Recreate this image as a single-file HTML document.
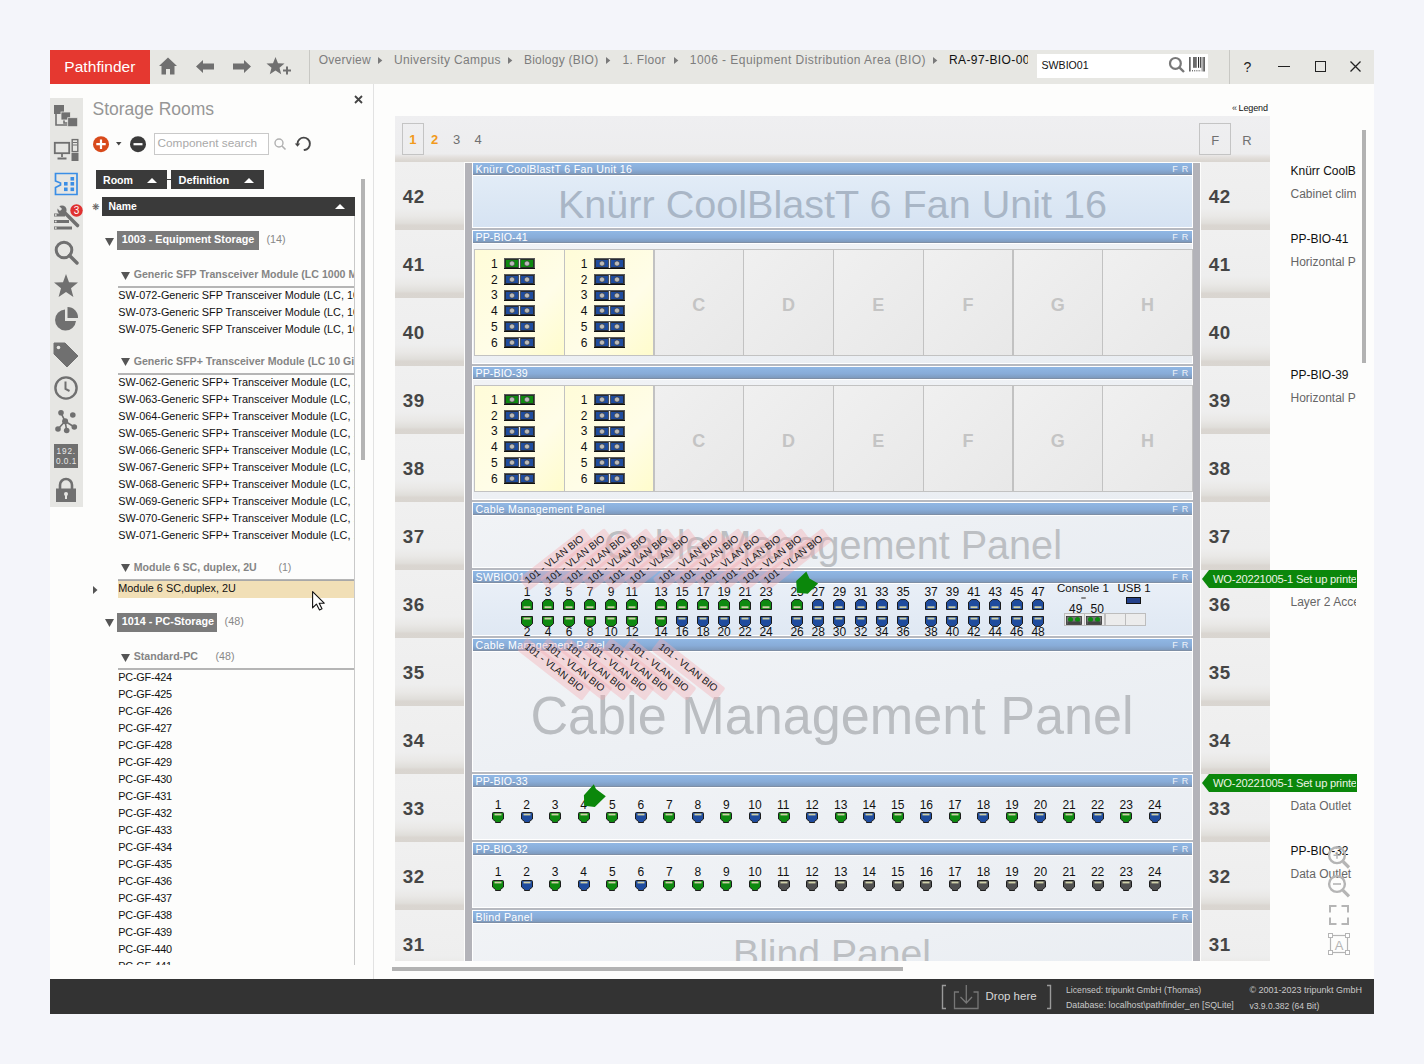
<!DOCTYPE html>
<html><head><meta charset="utf-8"><style>
html,body{margin:0;padding:0;}
body{width:1424px;height:1064px;overflow:hidden;position:relative;background:#f4f5fa;font-family:"Liberation Sans", sans-serif;}
div{box-sizing:border-box;}
</style></head><body>
<div style="position:absolute;left:50px;top:84px;width:1324px;height:895px;background:#fdfdfc;"></div><div style="position:absolute;left:50px;top:50px;width:1324px;height:34px;background:#e7e7e3;"></div><div style="position:absolute;left:50px;top:50px;width:100px;height:34px;background:#e53830;"></div><div style="position:absolute;left:64.3px;top:58.78px;font-size:15.5px;line-height:15.5px;height:15.5px;color:#fff;font-weight:normal;white-space:nowrap;letter-spacing:0.05px;">Pathfinder</div><svg style="position:absolute;left:159px;top:57px;overflow:visible;" width="18" height="18" viewBox="0 0 18 18"><path d="M9 0.5 L18 9 L15.5 9 L15.5 17.5 L11 17.5 L11 12 L7 12 L7 17.5 L2.5 17.5 L2.5 9 L0 9 Z" fill="#707070"/></svg><svg style="position:absolute;left:196px;top:60px;overflow:visible;" width="18" height="13" viewBox="0 0 18 13"><path d="M0 6.5 L7 0 L7 3.5 L18 3.5 L18 9.5 L7 9.5 L7 13 Z" fill="#707070"/></svg><svg style="position:absolute;left:233px;top:60px;overflow:visible;" width="18" height="13" viewBox="0 0 18 13"><path d="M18 6.5 L11 0 L11 3.5 L0 3.5 L0 9.5 L11 9.5 L11 13 Z" fill="#707070"/></svg><svg style="position:absolute;left:267px;top:57px;overflow:visible;" width="25" height="18" viewBox="0 0 25 18"><path d="M8.5 0 L11 6.2 L17.5 6.6 L12.5 10.8 L14.2 17.3 L8.5 13.6 L2.8 17.3 L4.5 10.8 L-0.5 6.6 L6 6.2 Z" fill="#707070"/><path d="M16 13.5 H24 M20 9.5 V17.5" stroke="#707070" stroke-width="2"/></svg><div style="position:absolute;left:309px;top:50px;width:1px;height:34px;background:#c8c8c4;"></div><div style="position:absolute;left:1229px;top:50px;width:1px;height:34px;background:#c8c8c4;"></div><div style="position:absolute;left:318.7px;top:53.64px;font-size:12px;line-height:12px;height:12px;color:#7d7d7d;font-weight:normal;white-space:nowrap;letter-spacing:0.29px;">Overview</div><svg style="position:absolute;left:378px;top:57px;overflow:visible;" width="5" height="7" viewBox="0 0 5 7"><path d="M0 0 L4.3 3.5 L0 7 Z" fill="#7a7a7a"/></svg><div style="position:absolute;left:394px;top:53.64px;font-size:12px;line-height:12px;height:12px;color:#7d7d7d;font-weight:normal;white-space:nowrap;letter-spacing:0.36px;">University Campus</div><svg style="position:absolute;left:508px;top:57px;overflow:visible;" width="5" height="7" viewBox="0 0 5 7"><path d="M0 0 L4.3 3.5 L0 7 Z" fill="#7a7a7a"/></svg><div style="position:absolute;left:523.9px;top:53.64px;font-size:12px;line-height:12px;height:12px;color:#7d7d7d;font-weight:normal;white-space:nowrap;letter-spacing:0.24px;">Biology (BIO)</div><svg style="position:absolute;left:606px;top:57px;overflow:visible;" width="5" height="7" viewBox="0 0 5 7"><path d="M0 0 L4.3 3.5 L0 7 Z" fill="#7a7a7a"/></svg><div style="position:absolute;left:622.5px;top:53.64px;font-size:12px;line-height:12px;height:12px;color:#7d7d7d;font-weight:normal;white-space:nowrap;letter-spacing:0.32px;">1. Floor</div><svg style="position:absolute;left:673.6px;top:57px;overflow:visible;" width="5" height="7" viewBox="0 0 5 7"><path d="M0 0 L4.3 3.5 L0 7 Z" fill="#7a7a7a"/></svg><div style="position:absolute;left:689.8px;top:53.64px;font-size:12px;line-height:12px;height:12px;color:#7d7d7d;font-weight:normal;white-space:nowrap;letter-spacing:0.45px;">1006 - Equipment Distribution Area (BIO)</div><svg style="position:absolute;left:933px;top:57px;overflow:visible;" width="5" height="7" viewBox="0 0 5 7"><path d="M0 0 L4.3 3.5 L0 7 Z" fill="#7a7a7a"/></svg><div style="position:absolute;left:949px;top:50px;width:79px;height:34px;overflow:hidden;"><div style="position:absolute;left:0px;top:3.64px;font-size:12px;line-height:12px;height:12px;color:#111;font-weight:normal;white-space:nowrap;letter-spacing:0.4px;">RA-97-BIO-001</div></div><div style="position:absolute;left:1037px;top:54px;width:171px;height:24px;background:#fff;"></div><div style="position:absolute;left:1041.5px;top:60.03px;font-size:10.6px;line-height:10.6px;height:10.6px;color:#111;font-weight:normal;white-space:nowrap;">SWBIO01</div><svg style="position:absolute;left:1166px;top:54px;overflow:visible;" width="20" height="20" viewBox="0 0 20 20"><circle cx="9.4" cy="9.4" r="5.4" fill="none" stroke="#787878" stroke-width="2.2"/><path d="M13.3 13.3 L18 18" stroke="#787878" stroke-width="2.4"/></svg><svg style="position:absolute;left:1188px;top:56px;overflow:visible;" width="19" height="17" viewBox="0 0 19 17"><rect x="1" y="1" width="1.7" height="14.5" fill="#666"/><rect x="5" y="1" width="3.8" height="10.8" fill="#6c6c6c"/><rect x="10" y="1" width="1.1" height="10.8" fill="#2a2a2a"/><rect x="12.2" y="1" width="1.1" height="10.8" fill="#2a2a2a"/><rect x="13.4" y="1" width="1.8" height="14.5" fill="#b0b0b0"/><rect x="15.2" y="1" width="1.8" height="14.5" fill="#666"/><path d="M4 14.8 H13" stroke="#333" stroke-width="1" stroke-dasharray="1 1.2"/></svg><div style="position:absolute;left:1243.5px;top:59.65px;font-size:14px;line-height:14px;height:14px;color:#222;font-weight:normal;white-space:nowrap;">?</div><div style="position:absolute;left:1278px;top:65.5px;width:12px;height:1.2px;background:#222;"></div><div style="position:absolute;left:1315px;top:61px;width:10.5px;height:10.5px;border:1.2px solid #222;"></div><svg style="position:absolute;left:1350px;top:61px;overflow:visible;" width="11" height="11" viewBox="0 0 11 11"><path d="M0.5 0.5 L10.5 10.5 M10.5 0.5 L0.5 10.5" stroke="#222" stroke-width="1.3"/></svg><div style="position:absolute;left:50px;top:979px;width:1324px;height:35px;background:#333333;"></div><svg style="position:absolute;left:942px;top:985px;overflow:visible;" width="110" height="25" viewBox="0 0 110 25"><path d="M4 0.5 H0.5 V23.5 H4" fill="none" stroke="#9a9a9a" stroke-width="1.4"/><path d="M105 0.5 H108.5 V23.5 H105" fill="none" stroke="#9a9a9a" stroke-width="1.4"/><path d="M17 7 H12.5 V23.5 H36 V7 H31.5" fill="none" stroke="#777" stroke-width="1.3"/><path d="M24.3 0 V18 M18.5 12 L24.3 18 L30 12" fill="none" stroke="#777" stroke-width="1.3"/></svg><div style="position:absolute;left:985.5px;top:991.27px;font-size:11.5px;line-height:11.5px;height:11.5px;color:#d8d8d8;font-weight:normal;white-space:nowrap;">Drop here</div><div style="position:absolute;left:1066px;top:985.84px;font-size:8.7px;line-height:8.7px;height:8.7px;color:#c9c9c9;font-weight:normal;white-space:nowrap;">Licensed: tripunkt GmbH (Thomas)</div><div style="position:absolute;left:1066px;top:1001.35px;font-size:8.8px;line-height:8.8px;height:8.8px;color:#c9c9c9;font-weight:normal;white-space:nowrap;">Database: localhost\pathfinder_en [SQLite]</div><div style="position:absolute;left:1249.4px;top:985.58px;font-size:9.0px;line-height:9.0px;height:9.0px;color:#c9c9c9;font-weight:normal;white-space:nowrap;">© 2001-2023 tripunkt GmbH</div><div style="position:absolute;left:1249.4px;top:1001.56px;font-size:8.55px;line-height:8.55px;height:8.55px;color:#c9c9c9;font-weight:normal;white-space:nowrap;">v3.9.0.382 (64 Bit)</div><div style="position:absolute;left:50px;top:98px;width:33px;height:409px;background:#e6e6e3;"></div><svg style="position:absolute;left:53px;top:104px;overflow:visible;" width="27" height="24" viewBox="0 0 27 24"><path d="M3 9 V21 H15 M11 15 V19 H15" stroke="#707070" stroke-width="1.6" fill="none"/><rect x="1" y="1" width="10" height="9" fill="#707070"/><rect x="8" y="8" width="9.5" height="8" fill="#707070" stroke="#e6e6e3" stroke-width="0.8"/><rect x="14.7" y="13.7" width="10" height="9" fill="#707070" stroke="#e6e6e3" stroke-width="0.8"/></svg><svg style="position:absolute;left:53px;top:138px;overflow:visible;" width="27" height="24" viewBox="0 0 27 24"><rect x="1.8" y="4.8" width="14.4" height="10.4" fill="none" stroke="#707070" stroke-width="1.8"/><path d="M9 15 V19" stroke="#707070" stroke-width="1.8"/><path d="M4.5 20.5 H13.5" stroke="#707070" stroke-width="2"/><rect x="19.2" y="1.6" width="5.6" height="12" fill="none" stroke="#707070" stroke-width="1.4"/><path d="M20 4.5 H24 M20 7 H24" stroke="#707070" stroke-width="1"/><rect x="18.5" y="15" width="7" height="8" fill="#707070"/></svg><svg style="position:absolute;left:53.5px;top:172px;overflow:visible;" width="25" height="24" viewBox="0 0 25 24"><path d="M1.5 1.5 H23 V22.5 H1.5 V15.5 L6.5 13 V11 L1.5 9 Z" fill="none" stroke="#3a8ee6" stroke-width="1.7"/><rect x="16.5" y="5" width="3.6" height="3.6" fill="#3a8ee6"/><rect x="10" y="10" width="3.6" height="3.6" fill="#3a8ee6"/><rect x="16.5" y="10" width="3.6" height="3.6" fill="#3a8ee6"/><rect x="10" y="15.5" width="3.6" height="3.6" fill="#3a8ee6"/><rect x="16.5" y="15.5" width="3.6" height="3.6" fill="#3a8ee6"/></svg><svg style="position:absolute;left:53px;top:205px;overflow:visible;" width="28" height="26" viewBox="0 0 28 26"><rect x="1" y="8.5" width="11" height="3" fill="#707070"/><rect x="1" y="15" width="15" height="3" fill="#707070"/><rect x="1" y="21.5" width="18" height="3" fill="#707070"/><rect x="1.8" y="9.2" width="1.8" height="1.6" fill="#e6e6e3"/><rect x="1.8" y="15.7" width="1.8" height="1.6" fill="#e6e6e3"/><rect x="1.8" y="22.2" width="1.8" height="1.6" fill="#e6e6e3"/><path d="M10 6 L24.5 20.5" stroke="#707070" stroke-width="3.6" stroke-linecap="round"/><circle cx="9" cy="5" r="4.6" fill="#707070"/><path d="M3.5 0.5 L8 5" stroke="#e6e6e3" stroke-width="3"/></svg><svg style="position:absolute;left:69.5px;top:203.5px;overflow:visible;" width="13" height="13" viewBox="0 0 13 13"><circle cx="6.5" cy="6.5" r="6.2" fill="#e03131"/><text x="6.5" y="10.3" font-size="10" font-family="Liberation Sans" fill="#fff" text-anchor="middle">3</text></svg><svg style="position:absolute;left:54px;top:240px;overflow:visible;" width="25" height="25" viewBox="0 0 25 25"><circle cx="10" cy="10" r="7.8" fill="none" stroke="#707070" stroke-width="3"/><path d="M15.5 15.5 L23 23" stroke="#707070" stroke-width="3.4" stroke-linecap="round"/></svg><svg style="position:absolute;left:54px;top:274px;overflow:visible;" width="24" height="23" viewBox="0 0 24 23"><path d="M12 0 L15 8.2 L24 8.6 L17 14.2 L19.4 23 L12 18 L4.6 23 L7 14.2 L0 8.6 L9 8.2 Z" fill="#707070"/></svg><svg style="position:absolute;left:54px;top:307px;overflow:visible;" width="25" height="25" viewBox="0 0 25 25"><path d="M11 2.5 A10.5 10.5 0 1 0 22 14 H11 Z" fill="#707070"/><path d="M13.5 0 A10.5 10.5 0 0 1 24 11 H13.5 Z" fill="#707070"/></svg><svg style="position:absolute;left:54px;top:342.5px;overflow:visible;" width="24" height="24" viewBox="0 0 24 24"><path d="M0 0 H11 L24 13 L13 24 L0 11 Z" fill="#707070" stroke="#707070" stroke-linejoin="round" stroke-width="1"/><circle cx="4.5" cy="4.5" r="1.8" fill="#e6e6e3"/></svg><svg style="position:absolute;left:54px;top:376px;overflow:visible;" width="24" height="24" viewBox="0 0 24 24"><circle cx="12" cy="12" r="10.6" fill="none" stroke="#707070" stroke-width="2.4"/><path d="M11.5 5.5 V13 L15.5 15" fill="none" stroke="#707070" stroke-width="2"/></svg><svg style="position:absolute;left:50px;top:404px;overflow:visible;" width="28" height="32" viewBox="0 0 28 32"><path d="M15.1 17.3 L11 8.8 M15.1 17.3 L8 25 M15.1 17.3 L16.7 26.5 M15.1 17.3 L24.3 23" stroke="#707070" stroke-width="1.6" fill="none"/><circle cx="15.1" cy="17.3" r="3" fill="#707070"/><circle cx="11" cy="8.8" r="2.8" fill="#707070"/><circle cx="22.8" cy="11" r="2.8" fill="#707070"/><circle cx="8" cy="25" r="2.8" fill="#707070"/><circle cx="16.7" cy="26.5" r="2.8" fill="#707070"/><circle cx="24.3" cy="23" r="2.8" fill="#707070"/></svg><div style="position:absolute;left:54px;top:444px;width:24px;height:24px;background:#707070;"></div><div style="position:absolute;left:56.5px;top:447.56px;font-size:8.2px;line-height:8.2px;height:8.2px;color:#e8e8e8;font-weight:normal;white-space:nowrap;letter-spacing:0.9px;">192.</div><div style="position:absolute;left:56px;top:457.56px;font-size:8.2px;line-height:8.2px;height:8.2px;color:#e8e8e8;font-weight:normal;white-space:nowrap;letter-spacing:0.5px;">0.0.1</div><svg style="position:absolute;left:55px;top:478px;overflow:visible;" width="22" height="24" viewBox="0 0 22 24"><path d="M5 11 V7 A6 6 0 0 1 17 7 V11" fill="none" stroke="#707070" stroke-width="2.6"/><rect x="1" y="10.5" width="20" height="13.5" fill="#707070"/><circle cx="11" cy="16" r="2" fill="#e6e6e3"/><rect x="10" y="16" width="2" height="5" fill="#e6e6e3"/></svg><div style="position:absolute;left:373px;top:84px;width:1px;height:895px;background:#e2e2e2;"></div><div style="position:absolute;left:92.5px;top:101.19px;font-size:17.5px;line-height:17.5px;height:17.5px;color:#969696;font-weight:normal;white-space:nowrap;letter-spacing:0px;">Storage Rooms</div><svg style="position:absolute;left:354px;top:95px;overflow:visible;" width="9" height="9" viewBox="0 0 9 9"><path d="M1 1 L8 8 M8 1 L1 8" stroke="#444" stroke-width="1.8"/></svg><svg style="position:absolute;left:93px;top:135.5px;overflow:visible;" width="17" height="17" viewBox="0 0 17 17"><circle cx="8" cy="8.2" r="8" fill="#d84a1b"/><path d="M8 3.5 V13 M3.3 8.2 H12.7" stroke="#fff" stroke-width="2.2"/></svg><svg style="position:absolute;left:116px;top:141.5px;overflow:visible;" width="6" height="4" viewBox="0 0 6 4"><path d="M0 0 H5.5 L2.75 3.5 Z" fill="#444"/></svg><svg style="position:absolute;left:130px;top:135.5px;overflow:visible;" width="17" height="17" viewBox="0 0 17 17"><circle cx="8" cy="8.2" r="8" fill="#3b3b3b"/><path d="M3.5 8.2 H12.5" stroke="#fff" stroke-width="2.2"/></svg><div style="position:absolute;left:154px;top:133px;width:115px;height:22px;border:1px solid #c9c9c9;background:#fff;"></div><div style="position:absolute;left:157.5px;top:138.01px;font-size:11.8px;line-height:11.8px;height:11.8px;color:#a9a9a9;font-weight:normal;white-space:nowrap;">Component search</div><svg style="position:absolute;left:273.5px;top:138px;overflow:visible;" width="13" height="12" viewBox="0 0 13 12"><circle cx="5" cy="5" r="4" fill="none" stroke="#b0b0b0" stroke-width="1.4"/><path d="M8 8 L11.5 11.5" stroke="#b0b0b0" stroke-width="1.6"/></svg><svg style="position:absolute;left:290px;top:133px;overflow:visible;" width="26" height="22" viewBox="0 0 26 22"><path d="M14.5 17 A6.2 6.2 0 1 0 7.5 10.5" fill="none" stroke="#474747" stroke-width="1.9" stroke-linecap="round"/><path d="M4.8 10.6 L10.2 10.6 L7.5 13.8 Z" fill="#474747"/></svg><div style="position:absolute;left:96px;top:170px;width:71px;height:19px;background:#3a3a3a;"></div><div style="position:absolute;left:167px;top:179px;width:4px;height:1px;background:#3a3a3a;"></div><div style="position:absolute;left:171px;top:170px;width:93px;height:19px;background:#3a3a3a;"></div><div style="position:absolute;left:103px;top:174.73px;font-size:10.6px;line-height:10.6px;height:10.6px;color:#fff;font-weight:bold;white-space:nowrap;">Room</div><div style="position:absolute;left:178.5px;top:175.09px;font-size:11px;line-height:11px;height:11px;color:#fff;font-weight:bold;white-space:nowrap;">Definition</div><svg style="position:absolute;left:147px;top:177.5px;overflow:visible;" width="10" height="5" viewBox="0 0 10 5"><path d="M0 5 L5 0 L10 5 Z" fill="#fff"/></svg><svg style="position:absolute;left:244px;top:177.5px;overflow:visible;" width="10" height="5" viewBox="0 0 10 5"><path d="M0 5 L5 0 L10 5 Z" fill="#fff"/></svg><div style="position:absolute;left:102px;top:197px;width:253px;height:19px;background:#3a3a3a;"></div><div style="position:absolute;left:108.4px;top:201.70px;font-size:10.4px;line-height:10.4px;height:10.4px;color:#fff;font-weight:bold;white-space:nowrap;">Name</div><svg style="position:absolute;left:334.5px;top:204px;overflow:visible;" width="10" height="5" viewBox="0 0 10 5"><path d="M0 5 L5 0 L10 5 Z" fill="#fff"/></svg><div style="position:absolute;left:91.5px;top:203.38px;font-size:9px;line-height:9px;height:9px;color:#555;font-weight:normal;white-space:nowrap;">❋</div><div style="position:absolute;left:354px;top:216px;width:1px;height:749px;background:#c9c9c9;"></div><div style="position:absolute;left:361px;top:179px;width:4px;height:281px;background:#b4b4b4;"></div><div style="position:absolute;left:0;top:0;width:1424px;height:1064px;clip-path:inset(216px 1070px 99px 84px);"><svg style="position:absolute;left:105px;top:237.5px;overflow:visible;" width="9" height="8" viewBox="0 0 9 8"><path d="M0 0 H9 L4.5 8 Z" fill="#555"/></svg><div style="position:absolute;left:117px;top:231px;width:142px;height:19px;background:#7b7b7b;"></div><div style="position:absolute;left:121.7px;top:234.26px;font-size:10.8px;line-height:10.8px;height:10.8px;color:#fff;font-weight:bold;white-space:nowrap;">1003 - Equipment Storage</div><div style="position:absolute;left:266.4px;top:234.26px;font-size:10.8px;line-height:10.8px;height:10.8px;color:#888;font-weight:normal;white-space:nowrap;">(14)</div><svg style="position:absolute;left:121px;top:271.5px;overflow:visible;" width="9" height="8" viewBox="0 0 9 8"><path d="M0 0 H9 L4.5 8 Z" fill="#555"/></svg><div style="position:absolute;left:118px;top:0px;width:236px;height:0px;"></div><div style="position:absolute;left:133.7px;top:269.03px;font-size:10.6px;line-height:10.6px;height:10.6px;color:#858585;font-weight:bold;white-space:nowrap;">Generic SFP Transceiver Module (LC 1000 M</div><div style="position:absolute;left:118px;top:286px;width:236px;height:2px;background:#b5b5b5;"></div><div style="position:absolute;left:118.3px;top:290.32px;font-size:10.85px;line-height:10.85px;height:10.85px;color:#111;font-weight:normal;white-space:nowrap;">SW-072-Generic SFP Transceiver Module (LC, 1000</div><div style="position:absolute;left:118.3px;top:307.32px;font-size:10.85px;line-height:10.85px;height:10.85px;color:#111;font-weight:normal;white-space:nowrap;">SW-073-Generic SFP Transceiver Module (LC, 1000</div><div style="position:absolute;left:118.3px;top:324.32px;font-size:10.85px;line-height:10.85px;height:10.85px;color:#111;font-weight:normal;white-space:nowrap;">SW-075-Generic SFP Transceiver Module (LC, 1000</div><svg style="position:absolute;left:121px;top:358.3px;overflow:visible;" width="9" height="8" viewBox="0 0 9 8"><path d="M0 0 H9 L4.5 8 Z" fill="#555"/></svg><div style="position:absolute;left:118px;top:0px;width:236px;height:0px;"></div><div style="position:absolute;left:133.7px;top:355.83px;font-size:10.6px;line-height:10.6px;height:10.6px;color:#858585;font-weight:bold;white-space:nowrap;">Generic SFP+ Transceiver Module (LC 10 Gi</div><div style="position:absolute;left:118px;top:372.8px;width:236px;height:2px;background:#b5b5b5;"></div><div style="position:absolute;left:118.3px;top:377.32px;font-size:10.85px;line-height:10.85px;height:10.85px;color:#111;font-weight:normal;white-space:nowrap;">SW-062-Generic SFP+ Transceiver Module (LC, 10</div><div style="position:absolute;left:118.3px;top:394.32px;font-size:10.85px;line-height:10.85px;height:10.85px;color:#111;font-weight:normal;white-space:nowrap;">SW-063-Generic SFP+ Transceiver Module (LC, 10</div><div style="position:absolute;left:118.3px;top:411.32px;font-size:10.85px;line-height:10.85px;height:10.85px;color:#111;font-weight:normal;white-space:nowrap;">SW-064-Generic SFP+ Transceiver Module (LC, 10</div><div style="position:absolute;left:118.3px;top:428.32px;font-size:10.85px;line-height:10.85px;height:10.85px;color:#111;font-weight:normal;white-space:nowrap;">SW-065-Generic SFP+ Transceiver Module (LC, 10</div><div style="position:absolute;left:118.3px;top:445.32px;font-size:10.85px;line-height:10.85px;height:10.85px;color:#111;font-weight:normal;white-space:nowrap;">SW-066-Generic SFP+ Transceiver Module (LC, 10</div><div style="position:absolute;left:118.3px;top:462.32px;font-size:10.85px;line-height:10.85px;height:10.85px;color:#111;font-weight:normal;white-space:nowrap;">SW-067-Generic SFP+ Transceiver Module (LC, 10</div><div style="position:absolute;left:118.3px;top:479.32px;font-size:10.85px;line-height:10.85px;height:10.85px;color:#111;font-weight:normal;white-space:nowrap;">SW-068-Generic SFP+ Transceiver Module (LC, 10</div><div style="position:absolute;left:118.3px;top:496.32px;font-size:10.85px;line-height:10.85px;height:10.85px;color:#111;font-weight:normal;white-space:nowrap;">SW-069-Generic SFP+ Transceiver Module (LC, 10</div><div style="position:absolute;left:118.3px;top:513.32px;font-size:10.85px;line-height:10.85px;height:10.85px;color:#111;font-weight:normal;white-space:nowrap;">SW-070-Generic SFP+ Transceiver Module (LC, 10</div><div style="position:absolute;left:118.3px;top:530.32px;font-size:10.85px;line-height:10.85px;height:10.85px;color:#111;font-weight:normal;white-space:nowrap;">SW-071-Generic SFP+ Transceiver Module (LC, 10</div><svg style="position:absolute;left:121px;top:564.2px;overflow:visible;" width="9" height="8" viewBox="0 0 9 8"><path d="M0 0 H9 L4.5 8 Z" fill="#555"/></svg><div style="position:absolute;left:118px;top:0px;width:236px;height:0px;"></div><div style="position:absolute;left:133.7px;top:561.73px;font-size:10.6px;line-height:10.6px;height:10.6px;color:#858585;font-weight:bold;white-space:nowrap;">Module 6 SC, duplex, 2U</div><div style="position:absolute;left:278.4px;top:561.73px;font-size:10.6px;line-height:10.6px;height:10.6px;color:#888;font-weight:normal;white-space:nowrap;">(1)</div><div style="position:absolute;left:118px;top:578.7px;width:236px;height:2px;background:#b5b5b5;"></div><div style="position:absolute;left:118px;top:580px;width:236px;height:18px;background:#f1dfb6;border-top:1.5px solid #a8a8a8;"></div><div style="position:absolute;left:118.3px;top:582.62px;font-size:10.85px;line-height:10.85px;height:10.85px;color:#111;font-weight:normal;white-space:nowrap;">Module 6 SC,duplex, 2U</div><svg style="position:absolute;left:93px;top:585.5px;overflow:visible;" width="5" height="8" viewBox="0 0 5 8"><path d="M0 0 L4.5 4 L0 8 Z" fill="#555"/></svg><svg style="position:absolute;left:105px;top:618.5px;overflow:visible;" width="9" height="8" viewBox="0 0 9 8"><path d="M0 0 H9 L4.5 8 Z" fill="#555"/></svg><div style="position:absolute;left:117px;top:613px;width:100px;height:19px;background:#7b7b7b;"></div><div style="position:absolute;left:121.7px;top:616.26px;font-size:10.8px;line-height:10.8px;height:10.8px;color:#fff;font-weight:bold;white-space:nowrap;">1014 - PC-Storage</div><div style="position:absolute;left:224.6px;top:616.26px;font-size:10.8px;line-height:10.8px;height:10.8px;color:#888;font-weight:normal;white-space:nowrap;">(48)</div><svg style="position:absolute;left:121px;top:653.7px;overflow:visible;" width="9" height="8" viewBox="0 0 9 8"><path d="M0 0 H9 L4.5 8 Z" fill="#555"/></svg><div style="position:absolute;left:118px;top:0px;width:236px;height:0px;"></div><div style="position:absolute;left:133.7px;top:651.23px;font-size:10.6px;line-height:10.6px;height:10.6px;color:#858585;font-weight:bold;white-space:nowrap;">Standard-PC</div><div style="position:absolute;left:215.6px;top:651.23px;font-size:10.6px;line-height:10.6px;height:10.6px;color:#888;font-weight:normal;white-space:nowrap;">(48)</div><div style="position:absolute;left:118px;top:668.2px;width:236px;height:2px;background:#b5b5b5;"></div><div style="position:absolute;left:118.3px;top:671.62px;font-size:10.85px;line-height:10.85px;height:10.85px;color:#111;font-weight:normal;white-space:nowrap;letter-spacing:-0.2px;">PC-GF-424</div><div style="position:absolute;left:118.3px;top:688.62px;font-size:10.85px;line-height:10.85px;height:10.85px;color:#111;font-weight:normal;white-space:nowrap;letter-spacing:-0.2px;">PC-GF-425</div><div style="position:absolute;left:118.3px;top:705.62px;font-size:10.85px;line-height:10.85px;height:10.85px;color:#111;font-weight:normal;white-space:nowrap;letter-spacing:-0.2px;">PC-GF-426</div><div style="position:absolute;left:118.3px;top:722.62px;font-size:10.85px;line-height:10.85px;height:10.85px;color:#111;font-weight:normal;white-space:nowrap;letter-spacing:-0.2px;">PC-GF-427</div><div style="position:absolute;left:118.3px;top:739.62px;font-size:10.85px;line-height:10.85px;height:10.85px;color:#111;font-weight:normal;white-space:nowrap;letter-spacing:-0.2px;">PC-GF-428</div><div style="position:absolute;left:118.3px;top:756.62px;font-size:10.85px;line-height:10.85px;height:10.85px;color:#111;font-weight:normal;white-space:nowrap;letter-spacing:-0.2px;">PC-GF-429</div><div style="position:absolute;left:118.3px;top:773.62px;font-size:10.85px;line-height:10.85px;height:10.85px;color:#111;font-weight:normal;white-space:nowrap;letter-spacing:-0.2px;">PC-GF-430</div><div style="position:absolute;left:118.3px;top:790.62px;font-size:10.85px;line-height:10.85px;height:10.85px;color:#111;font-weight:normal;white-space:nowrap;letter-spacing:-0.2px;">PC-GF-431</div><div style="position:absolute;left:118.3px;top:807.62px;font-size:10.85px;line-height:10.85px;height:10.85px;color:#111;font-weight:normal;white-space:nowrap;letter-spacing:-0.2px;">PC-GF-432</div><div style="position:absolute;left:118.3px;top:824.62px;font-size:10.85px;line-height:10.85px;height:10.85px;color:#111;font-weight:normal;white-space:nowrap;letter-spacing:-0.2px;">PC-GF-433</div><div style="position:absolute;left:118.3px;top:841.62px;font-size:10.85px;line-height:10.85px;height:10.85px;color:#111;font-weight:normal;white-space:nowrap;letter-spacing:-0.2px;">PC-GF-434</div><div style="position:absolute;left:118.3px;top:858.62px;font-size:10.85px;line-height:10.85px;height:10.85px;color:#111;font-weight:normal;white-space:nowrap;letter-spacing:-0.2px;">PC-GF-435</div><div style="position:absolute;left:118.3px;top:875.62px;font-size:10.85px;line-height:10.85px;height:10.85px;color:#111;font-weight:normal;white-space:nowrap;letter-spacing:-0.2px;">PC-GF-436</div><div style="position:absolute;left:118.3px;top:892.62px;font-size:10.85px;line-height:10.85px;height:10.85px;color:#111;font-weight:normal;white-space:nowrap;letter-spacing:-0.2px;">PC-GF-437</div><div style="position:absolute;left:118.3px;top:909.62px;font-size:10.85px;line-height:10.85px;height:10.85px;color:#111;font-weight:normal;white-space:nowrap;letter-spacing:-0.2px;">PC-GF-438</div><div style="position:absolute;left:118.3px;top:926.62px;font-size:10.85px;line-height:10.85px;height:10.85px;color:#111;font-weight:normal;white-space:nowrap;letter-spacing:-0.2px;">PC-GF-439</div><div style="position:absolute;left:118.3px;top:943.62px;font-size:10.85px;line-height:10.85px;height:10.85px;color:#111;font-weight:normal;white-space:nowrap;letter-spacing:-0.2px;">PC-GF-440</div><div style="position:absolute;left:118.3px;top:960.62px;font-size:10.85px;line-height:10.85px;height:10.85px;color:#111;font-weight:normal;white-space:nowrap;letter-spacing:-0.2px;">PC-GF-441</div></div><svg style="position:absolute;left:311.8px;top:590.6px;overflow:visible;" width="14" height="21" viewBox="0 0 14 21"><path d="M0.6 0.6 V16.9 L4.4 13.1 L7.5 18.9 L10 17.8 L7.2 12.2 L12.2 12.2 Z" fill="#fff" stroke="#111" stroke-width="1.1" stroke-linejoin="round"/></svg><div style="position:absolute;left:395px;top:116px;width:875px;height:46px;background:linear-gradient(#efeff1 0%,#ededee 82%,#e4e1de 89%,#dcd8d3 96%,#d9d5d0 100%);"></div><div style="position:absolute;left:402px;top:123px;width:22px;height:32px;border:1px solid #c4c4c4;"></div><div style="position:absolute;left:409.3px;top:132.70px;font-size:13px;line-height:13px;height:13px;color:#f29a1c;font-weight:bold;white-space:nowrap;">1</div><div style="position:absolute;left:431px;top:132.70px;font-size:13px;line-height:13px;height:13px;color:#f29a1c;font-weight:bold;white-space:nowrap;">2</div><div style="position:absolute;left:453px;top:133.20px;font-size:13px;line-height:13px;height:13px;color:#707070;font-weight:normal;white-space:nowrap;">3</div><div style="position:absolute;left:474.5px;top:133.20px;font-size:13px;line-height:13px;height:13px;color:#707070;font-weight:normal;white-space:nowrap;">4</div><div style="position:absolute;left:1199px;top:123px;width:32px;height:32px;border:1px solid #c4c4c4;"></div><div style="position:absolute;left:1211.3px;top:133.60px;font-size:13px;line-height:13px;height:13px;color:#707070;font-weight:normal;white-space:nowrap;">F</div><div style="position:absolute;left:1242.3px;top:133.60px;font-size:13px;line-height:13px;height:13px;color:#707070;font-weight:normal;white-space:nowrap;">R</div><div style="position:absolute;left:1232px;top:104.38px;font-size:9px;line-height:9px;height:9px;color:#333;font-weight:normal;white-space:nowrap;">«</div><div style="position:absolute;left:1238.5px;top:104.38px;font-size:9px;line-height:9px;height:9px;color:#111;font-weight:normal;white-space:nowrap;letter-spacing:-0.1px;">Legend</div><div style="position:absolute;left:0;top:0;width:1424px;height:1064px;clip-path:inset(116px 50px 103px 380px);"><div style="position:absolute;left:395px;top:162px;width:69px;height:68px;background:linear-gradient(#f0f0f0 0%,#eeeeee 68%,#e9e8e6 80%,#e0deda 90%,#dad6d1 93%,#d9d5d0 100%);"></div><div style="position:absolute;left:1201px;top:162px;width:69px;height:68px;background:linear-gradient(#f0f0f0 0%,#eeeeee 68%,#e9e8e6 80%,#e0deda 90%,#dad6d1 93%,#d9d5d0 100%);"></div><div style="position:absolute;left:402.8px;top:187.69px;font-size:18.8px;line-height:18.8px;height:18.8px;color:#454545;font-weight:bold;white-space:nowrap;letter-spacing:0.4px;">42</div><div style="position:absolute;left:1208.8px;top:187.69px;font-size:18.8px;line-height:18.8px;height:18.8px;color:#454545;font-weight:bold;white-space:nowrap;letter-spacing:0.4px;">42</div><div style="position:absolute;left:395px;top:230px;width:69px;height:68px;background:linear-gradient(#f0f0f0 0%,#eeeeee 68%,#e9e8e6 80%,#e0deda 90%,#dad6d1 93%,#d9d5d0 100%);"></div><div style="position:absolute;left:1201px;top:230px;width:69px;height:68px;background:linear-gradient(#f0f0f0 0%,#eeeeee 68%,#e9e8e6 80%,#e0deda 90%,#dad6d1 93%,#d9d5d0 100%);"></div><div style="position:absolute;left:402.8px;top:255.69px;font-size:18.8px;line-height:18.8px;height:18.8px;color:#454545;font-weight:bold;white-space:nowrap;letter-spacing:0.4px;">41</div><div style="position:absolute;left:1208.8px;top:255.69px;font-size:18.8px;line-height:18.8px;height:18.8px;color:#454545;font-weight:bold;white-space:nowrap;letter-spacing:0.4px;">41</div><div style="position:absolute;left:395px;top:298px;width:69px;height:68px;background:linear-gradient(#f0f0f0 0%,#eeeeee 68%,#e9e8e6 80%,#e0deda 90%,#dad6d1 93%,#d9d5d0 100%);"></div><div style="position:absolute;left:1201px;top:298px;width:69px;height:68px;background:linear-gradient(#f0f0f0 0%,#eeeeee 68%,#e9e8e6 80%,#e0deda 90%,#dad6d1 93%,#d9d5d0 100%);"></div><div style="position:absolute;left:402.8px;top:323.69px;font-size:18.8px;line-height:18.8px;height:18.8px;color:#454545;font-weight:bold;white-space:nowrap;letter-spacing:0.4px;">40</div><div style="position:absolute;left:1208.8px;top:323.69px;font-size:18.8px;line-height:18.8px;height:18.8px;color:#454545;font-weight:bold;white-space:nowrap;letter-spacing:0.4px;">40</div><div style="position:absolute;left:395px;top:366px;width:69px;height:68px;background:linear-gradient(#f0f0f0 0%,#eeeeee 68%,#e9e8e6 80%,#e0deda 90%,#dad6d1 93%,#d9d5d0 100%);"></div><div style="position:absolute;left:1201px;top:366px;width:69px;height:68px;background:linear-gradient(#f0f0f0 0%,#eeeeee 68%,#e9e8e6 80%,#e0deda 90%,#dad6d1 93%,#d9d5d0 100%);"></div><div style="position:absolute;left:402.8px;top:391.69px;font-size:18.8px;line-height:18.8px;height:18.8px;color:#454545;font-weight:bold;white-space:nowrap;letter-spacing:0.4px;">39</div><div style="position:absolute;left:1208.8px;top:391.69px;font-size:18.8px;line-height:18.8px;height:18.8px;color:#454545;font-weight:bold;white-space:nowrap;letter-spacing:0.4px;">39</div><div style="position:absolute;left:395px;top:434px;width:69px;height:68px;background:linear-gradient(#f0f0f0 0%,#eeeeee 68%,#e9e8e6 80%,#e0deda 90%,#dad6d1 93%,#d9d5d0 100%);"></div><div style="position:absolute;left:1201px;top:434px;width:69px;height:68px;background:linear-gradient(#f0f0f0 0%,#eeeeee 68%,#e9e8e6 80%,#e0deda 90%,#dad6d1 93%,#d9d5d0 100%);"></div><div style="position:absolute;left:402.8px;top:459.69px;font-size:18.8px;line-height:18.8px;height:18.8px;color:#454545;font-weight:bold;white-space:nowrap;letter-spacing:0.4px;">38</div><div style="position:absolute;left:1208.8px;top:459.69px;font-size:18.8px;line-height:18.8px;height:18.8px;color:#454545;font-weight:bold;white-space:nowrap;letter-spacing:0.4px;">38</div><div style="position:absolute;left:395px;top:502px;width:69px;height:68px;background:linear-gradient(#f0f0f0 0%,#eeeeee 68%,#e9e8e6 80%,#e0deda 90%,#dad6d1 93%,#d9d5d0 100%);"></div><div style="position:absolute;left:1201px;top:502px;width:69px;height:68px;background:linear-gradient(#f0f0f0 0%,#eeeeee 68%,#e9e8e6 80%,#e0deda 90%,#dad6d1 93%,#d9d5d0 100%);"></div><div style="position:absolute;left:402.8px;top:527.69px;font-size:18.8px;line-height:18.8px;height:18.8px;color:#454545;font-weight:bold;white-space:nowrap;letter-spacing:0.4px;">37</div><div style="position:absolute;left:1208.8px;top:527.69px;font-size:18.8px;line-height:18.8px;height:18.8px;color:#454545;font-weight:bold;white-space:nowrap;letter-spacing:0.4px;">37</div><div style="position:absolute;left:395px;top:570px;width:69px;height:68px;background:linear-gradient(#f0f0f0 0%,#eeeeee 68%,#e9e8e6 80%,#e0deda 90%,#dad6d1 93%,#d9d5d0 100%);"></div><div style="position:absolute;left:1201px;top:570px;width:69px;height:68px;background:linear-gradient(#f0f0f0 0%,#eeeeee 68%,#e9e8e6 80%,#e0deda 90%,#dad6d1 93%,#d9d5d0 100%);"></div><div style="position:absolute;left:402.8px;top:595.69px;font-size:18.8px;line-height:18.8px;height:18.8px;color:#454545;font-weight:bold;white-space:nowrap;letter-spacing:0.4px;">36</div><div style="position:absolute;left:1208.8px;top:595.69px;font-size:18.8px;line-height:18.8px;height:18.8px;color:#454545;font-weight:bold;white-space:nowrap;letter-spacing:0.4px;">36</div><div style="position:absolute;left:395px;top:638px;width:69px;height:68px;background:linear-gradient(#f0f0f0 0%,#eeeeee 68%,#e9e8e6 80%,#e0deda 90%,#dad6d1 93%,#d9d5d0 100%);"></div><div style="position:absolute;left:1201px;top:638px;width:69px;height:68px;background:linear-gradient(#f0f0f0 0%,#eeeeee 68%,#e9e8e6 80%,#e0deda 90%,#dad6d1 93%,#d9d5d0 100%);"></div><div style="position:absolute;left:402.8px;top:663.69px;font-size:18.8px;line-height:18.8px;height:18.8px;color:#454545;font-weight:bold;white-space:nowrap;letter-spacing:0.4px;">35</div><div style="position:absolute;left:1208.8px;top:663.69px;font-size:18.8px;line-height:18.8px;height:18.8px;color:#454545;font-weight:bold;white-space:nowrap;letter-spacing:0.4px;">35</div><div style="position:absolute;left:395px;top:706px;width:69px;height:68px;background:linear-gradient(#f0f0f0 0%,#eeeeee 68%,#e9e8e6 80%,#e0deda 90%,#dad6d1 93%,#d9d5d0 100%);"></div><div style="position:absolute;left:1201px;top:706px;width:69px;height:68px;background:linear-gradient(#f0f0f0 0%,#eeeeee 68%,#e9e8e6 80%,#e0deda 90%,#dad6d1 93%,#d9d5d0 100%);"></div><div style="position:absolute;left:402.8px;top:731.69px;font-size:18.8px;line-height:18.8px;height:18.8px;color:#454545;font-weight:bold;white-space:nowrap;letter-spacing:0.4px;">34</div><div style="position:absolute;left:1208.8px;top:731.69px;font-size:18.8px;line-height:18.8px;height:18.8px;color:#454545;font-weight:bold;white-space:nowrap;letter-spacing:0.4px;">34</div><div style="position:absolute;left:395px;top:774px;width:69px;height:68px;background:linear-gradient(#f0f0f0 0%,#eeeeee 68%,#e9e8e6 80%,#e0deda 90%,#dad6d1 93%,#d9d5d0 100%);"></div><div style="position:absolute;left:1201px;top:774px;width:69px;height:68px;background:linear-gradient(#f0f0f0 0%,#eeeeee 68%,#e9e8e6 80%,#e0deda 90%,#dad6d1 93%,#d9d5d0 100%);"></div><div style="position:absolute;left:402.8px;top:799.69px;font-size:18.8px;line-height:18.8px;height:18.8px;color:#454545;font-weight:bold;white-space:nowrap;letter-spacing:0.4px;">33</div><div style="position:absolute;left:1208.8px;top:799.69px;font-size:18.8px;line-height:18.8px;height:18.8px;color:#454545;font-weight:bold;white-space:nowrap;letter-spacing:0.4px;">33</div><div style="position:absolute;left:395px;top:842px;width:69px;height:68px;background:linear-gradient(#f0f0f0 0%,#eeeeee 68%,#e9e8e6 80%,#e0deda 90%,#dad6d1 93%,#d9d5d0 100%);"></div><div style="position:absolute;left:1201px;top:842px;width:69px;height:68px;background:linear-gradient(#f0f0f0 0%,#eeeeee 68%,#e9e8e6 80%,#e0deda 90%,#dad6d1 93%,#d9d5d0 100%);"></div><div style="position:absolute;left:402.8px;top:867.69px;font-size:18.8px;line-height:18.8px;height:18.8px;color:#454545;font-weight:bold;white-space:nowrap;letter-spacing:0.4px;">32</div><div style="position:absolute;left:1208.8px;top:867.69px;font-size:18.8px;line-height:18.8px;height:18.8px;color:#454545;font-weight:bold;white-space:nowrap;letter-spacing:0.4px;">32</div><div style="position:absolute;left:395px;top:910px;width:69px;height:68px;background:linear-gradient(#f0f0f0 0%,#eeeeee 68%,#e9e8e6 80%,#e0deda 90%,#dad6d1 93%,#d9d5d0 100%);"></div><div style="position:absolute;left:1201px;top:910px;width:69px;height:68px;background:linear-gradient(#f0f0f0 0%,#eeeeee 68%,#e9e8e6 80%,#e0deda 90%,#dad6d1 93%,#d9d5d0 100%);"></div><div style="position:absolute;left:402.8px;top:935.69px;font-size:18.8px;line-height:18.8px;height:18.8px;color:#454545;font-weight:bold;white-space:nowrap;letter-spacing:0.4px;">31</div><div style="position:absolute;left:1208.8px;top:935.69px;font-size:18.8px;line-height:18.8px;height:18.8px;color:#454545;font-weight:bold;white-space:nowrap;letter-spacing:0.4px;">31</div><div style="position:absolute;left:472px;top:162px;width:721px;height:68px;background:#fff;"></div><div style="position:absolute;left:465px;top:163px;width:7px;height:67.5px;background:#b3b3b9;"></div><div style="position:absolute;left:1193px;top:163px;width:7px;height:67.5px;background:#b3b3b9;"></div><div style="position:absolute;left:473px;top:163px;width:719px;height:12px;background:linear-gradient(#90b7e4 0%,#88acd8 55%,#7f9cc0 88%,#7e8898 100%);"></div><div style="position:absolute;left:475.5px;top:163.83px;font-size:10.6px;line-height:10.6px;height:10.6px;color:#fff;font-weight:normal;white-space:nowrap;letter-spacing:0.32px;">Knürr CoolBlastT 6 Fan Unit 16</div><div style="position:absolute;left:1172.2px;top:164.58px;font-size:9px;line-height:9px;height:9px;color:#eef2f8;font-weight:normal;white-space:nowrap;">F</div><div style="position:absolute;left:1181.8px;top:164.58px;font-size:9px;line-height:9px;height:9px;color:#eef2f8;font-weight:normal;white-space:nowrap;">R</div><div style="position:absolute;left:473px;top:176px;width:719px;height:51px;background:linear-gradient(#e2ecf7,#d6e3f2);"></div><div style="position:absolute;left:472px;top:228px;width:721px;height:1.6px;background:#b6b9c0;"></div><div style="position:absolute;left:232.5px;top:185.48px;width:1200px;text-align:center;font-size:39.6px;line-height:39.6px;height:39.6px;color:#a9b6c6;white-space:nowrap;transform:scaleX(1.0);transform-origin:50% 0;">Knürr CoolBlastT 6 Fan Unit 16</div><div style="position:absolute;left:472px;top:230px;width:721px;height:136px;background:#fff;"></div><div style="position:absolute;left:465px;top:231px;width:7px;height:135.5px;background:#b3b3b9;"></div><div style="position:absolute;left:1193px;top:231px;width:7px;height:135.5px;background:#b3b3b9;"></div><div style="position:absolute;left:473px;top:231px;width:719px;height:12px;background:linear-gradient(#90b7e4 0%,#88acd8 55%,#7f9cc0 88%,#7e8898 100%);"></div><div style="position:absolute;left:475.5px;top:231.83px;font-size:10.6px;line-height:10.6px;height:10.6px;color:#fff;font-weight:normal;white-space:nowrap;letter-spacing:0.1px;">PP-BIO-41</div><div style="position:absolute;left:1172.2px;top:232.58px;font-size:9px;line-height:9px;height:9px;color:#eef2f8;font-weight:normal;white-space:nowrap;">F</div><div style="position:absolute;left:1181.8px;top:232.58px;font-size:9px;line-height:9px;height:9px;color:#eef2f8;font-weight:normal;white-space:nowrap;">R</div><div style="position:absolute;left:473px;top:244px;width:719px;height:119px;background:linear-gradient(170deg,#f1f3f6,#e9edf2);"></div><div style="position:absolute;left:472px;top:364px;width:721px;height:1.6px;background:#b6b9c0;"></div><div style="position:absolute;left:474.0px;top:249.2px;width:90.5px;height:106.8px;border:1px solid #c2c2c2;background:linear-gradient(135deg,#fffcd8,#fffde8 60%,#fffccc);"></div><div style="position:absolute;left:491.0px;top:257.84px;font-size:12px;line-height:12px;height:12px;color:#111;font-weight:normal;white-space:nowrap;">1</div><svg style="position:absolute;left:504.0px;top:258.0px;overflow:visible;" width="31" height="11" viewBox="0 0 31 11"><rect x="0" y="0" width="31" height="11" fill="#5a5a5a"/><rect x="0" y="10" width="31" height="1" fill="#111"/><rect x="1.5" y="1.5" width="13" height="8" fill="#0e8a10" stroke="#222" stroke-width="0.8"/><rect x="16.5" y="1.5" width="13" height="8" fill="#0e8a10" stroke="#222" stroke-width="0.8"/><rect x="14.8" y="1" width="1.4" height="9" fill="#eee"/><circle cx="8" cy="5.5" r="2.6" fill="#bbb" stroke="#333" stroke-width="0.6"/><circle cx="23" cy="5.5" r="2.6" fill="#bbb" stroke="#333" stroke-width="0.6"/></svg><div style="position:absolute;left:491.0px;top:273.64px;font-size:12px;line-height:12px;height:12px;color:#111;font-weight:normal;white-space:nowrap;">2</div><svg style="position:absolute;left:504.0px;top:273.8px;overflow:visible;" width="31" height="11" viewBox="0 0 31 11"><rect x="0" y="0" width="31" height="11" fill="#5a5a5a"/><rect x="0" y="10" width="31" height="1" fill="#111"/><rect x="1.5" y="1.5" width="13" height="8" fill="#1f4c9e" stroke="#222" stroke-width="0.8"/><rect x="16.5" y="1.5" width="13" height="8" fill="#1f4c9e" stroke="#222" stroke-width="0.8"/><rect x="14.8" y="1" width="1.4" height="9" fill="#eee"/><circle cx="8" cy="5.5" r="2.6" fill="#bbb" stroke="#333" stroke-width="0.6"/><circle cx="23" cy="5.5" r="2.6" fill="#bbb" stroke="#333" stroke-width="0.6"/></svg><div style="position:absolute;left:491.0px;top:289.44px;font-size:12px;line-height:12px;height:12px;color:#111;font-weight:normal;white-space:nowrap;">3</div><svg style="position:absolute;left:504.0px;top:289.6px;overflow:visible;" width="31" height="11" viewBox="0 0 31 11"><rect x="0" y="0" width="31" height="11" fill="#5a5a5a"/><rect x="0" y="10" width="31" height="1" fill="#111"/><rect x="1.5" y="1.5" width="13" height="8" fill="#1f4c9e" stroke="#222" stroke-width="0.8"/><rect x="16.5" y="1.5" width="13" height="8" fill="#1f4c9e" stroke="#222" stroke-width="0.8"/><rect x="14.8" y="1" width="1.4" height="9" fill="#eee"/><circle cx="8" cy="5.5" r="2.6" fill="#bbb" stroke="#333" stroke-width="0.6"/><circle cx="23" cy="5.5" r="2.6" fill="#bbb" stroke="#333" stroke-width="0.6"/></svg><div style="position:absolute;left:491.0px;top:305.24px;font-size:12px;line-height:12px;height:12px;color:#111;font-weight:normal;white-space:nowrap;">4</div><svg style="position:absolute;left:504.0px;top:305.4px;overflow:visible;" width="31" height="11" viewBox="0 0 31 11"><rect x="0" y="0" width="31" height="11" fill="#5a5a5a"/><rect x="0" y="10" width="31" height="1" fill="#111"/><rect x="1.5" y="1.5" width="13" height="8" fill="#1f4c9e" stroke="#222" stroke-width="0.8"/><rect x="16.5" y="1.5" width="13" height="8" fill="#1f4c9e" stroke="#222" stroke-width="0.8"/><rect x="14.8" y="1" width="1.4" height="9" fill="#eee"/><circle cx="8" cy="5.5" r="2.6" fill="#bbb" stroke="#333" stroke-width="0.6"/><circle cx="23" cy="5.5" r="2.6" fill="#bbb" stroke="#333" stroke-width="0.6"/></svg><div style="position:absolute;left:491.0px;top:321.04px;font-size:12px;line-height:12px;height:12px;color:#111;font-weight:normal;white-space:nowrap;">5</div><svg style="position:absolute;left:504.0px;top:321.2px;overflow:visible;" width="31" height="11" viewBox="0 0 31 11"><rect x="0" y="0" width="31" height="11" fill="#5a5a5a"/><rect x="0" y="10" width="31" height="1" fill="#111"/><rect x="1.5" y="1.5" width="13" height="8" fill="#1f4c9e" stroke="#222" stroke-width="0.8"/><rect x="16.5" y="1.5" width="13" height="8" fill="#1f4c9e" stroke="#222" stroke-width="0.8"/><rect x="14.8" y="1" width="1.4" height="9" fill="#eee"/><circle cx="8" cy="5.5" r="2.6" fill="#bbb" stroke="#333" stroke-width="0.6"/><circle cx="23" cy="5.5" r="2.6" fill="#bbb" stroke="#333" stroke-width="0.6"/></svg><div style="position:absolute;left:491.0px;top:336.84px;font-size:12px;line-height:12px;height:12px;color:#111;font-weight:normal;white-space:nowrap;">6</div><svg style="position:absolute;left:504.0px;top:337.0px;overflow:visible;" width="31" height="11" viewBox="0 0 31 11"><rect x="0" y="0" width="31" height="11" fill="#5a5a5a"/><rect x="0" y="10" width="31" height="1" fill="#111"/><rect x="1.5" y="1.5" width="13" height="8" fill="#1f4c9e" stroke="#222" stroke-width="0.8"/><rect x="16.5" y="1.5" width="13" height="8" fill="#1f4c9e" stroke="#222" stroke-width="0.8"/><rect x="14.8" y="1" width="1.4" height="9" fill="#eee"/><circle cx="8" cy="5.5" r="2.6" fill="#bbb" stroke="#333" stroke-width="0.6"/><circle cx="23" cy="5.5" r="2.6" fill="#bbb" stroke="#333" stroke-width="0.6"/></svg><div style="position:absolute;left:563.75px;top:249.2px;width:90.5px;height:106.8px;border:1px solid #c2c2c2;background:linear-gradient(135deg,#fffcd8,#fffde8 60%,#fffccc);"></div><div style="position:absolute;left:580.75px;top:257.84px;font-size:12px;line-height:12px;height:12px;color:#111;font-weight:normal;white-space:nowrap;">1</div><svg style="position:absolute;left:593.75px;top:258.0px;overflow:visible;" width="31" height="11" viewBox="0 0 31 11"><rect x="0" y="0" width="31" height="11" fill="#5a5a5a"/><rect x="0" y="10" width="31" height="1" fill="#111"/><rect x="1.5" y="1.5" width="13" height="8" fill="#1f4c9e" stroke="#222" stroke-width="0.8"/><rect x="16.5" y="1.5" width="13" height="8" fill="#1f4c9e" stroke="#222" stroke-width="0.8"/><rect x="14.8" y="1" width="1.4" height="9" fill="#eee"/><circle cx="8" cy="5.5" r="2.6" fill="#bbb" stroke="#333" stroke-width="0.6"/><circle cx="23" cy="5.5" r="2.6" fill="#bbb" stroke="#333" stroke-width="0.6"/></svg><div style="position:absolute;left:580.75px;top:273.64px;font-size:12px;line-height:12px;height:12px;color:#111;font-weight:normal;white-space:nowrap;">2</div><svg style="position:absolute;left:593.75px;top:273.8px;overflow:visible;" width="31" height="11" viewBox="0 0 31 11"><rect x="0" y="0" width="31" height="11" fill="#5a5a5a"/><rect x="0" y="10" width="31" height="1" fill="#111"/><rect x="1.5" y="1.5" width="13" height="8" fill="#1f4c9e" stroke="#222" stroke-width="0.8"/><rect x="16.5" y="1.5" width="13" height="8" fill="#1f4c9e" stroke="#222" stroke-width="0.8"/><rect x="14.8" y="1" width="1.4" height="9" fill="#eee"/><circle cx="8" cy="5.5" r="2.6" fill="#bbb" stroke="#333" stroke-width="0.6"/><circle cx="23" cy="5.5" r="2.6" fill="#bbb" stroke="#333" stroke-width="0.6"/></svg><div style="position:absolute;left:580.75px;top:289.44px;font-size:12px;line-height:12px;height:12px;color:#111;font-weight:normal;white-space:nowrap;">3</div><svg style="position:absolute;left:593.75px;top:289.6px;overflow:visible;" width="31" height="11" viewBox="0 0 31 11"><rect x="0" y="0" width="31" height="11" fill="#5a5a5a"/><rect x="0" y="10" width="31" height="1" fill="#111"/><rect x="1.5" y="1.5" width="13" height="8" fill="#1f4c9e" stroke="#222" stroke-width="0.8"/><rect x="16.5" y="1.5" width="13" height="8" fill="#1f4c9e" stroke="#222" stroke-width="0.8"/><rect x="14.8" y="1" width="1.4" height="9" fill="#eee"/><circle cx="8" cy="5.5" r="2.6" fill="#bbb" stroke="#333" stroke-width="0.6"/><circle cx="23" cy="5.5" r="2.6" fill="#bbb" stroke="#333" stroke-width="0.6"/></svg><div style="position:absolute;left:580.75px;top:305.24px;font-size:12px;line-height:12px;height:12px;color:#111;font-weight:normal;white-space:nowrap;">4</div><svg style="position:absolute;left:593.75px;top:305.4px;overflow:visible;" width="31" height="11" viewBox="0 0 31 11"><rect x="0" y="0" width="31" height="11" fill="#5a5a5a"/><rect x="0" y="10" width="31" height="1" fill="#111"/><rect x="1.5" y="1.5" width="13" height="8" fill="#1f4c9e" stroke="#222" stroke-width="0.8"/><rect x="16.5" y="1.5" width="13" height="8" fill="#1f4c9e" stroke="#222" stroke-width="0.8"/><rect x="14.8" y="1" width="1.4" height="9" fill="#eee"/><circle cx="8" cy="5.5" r="2.6" fill="#bbb" stroke="#333" stroke-width="0.6"/><circle cx="23" cy="5.5" r="2.6" fill="#bbb" stroke="#333" stroke-width="0.6"/></svg><div style="position:absolute;left:580.75px;top:321.04px;font-size:12px;line-height:12px;height:12px;color:#111;font-weight:normal;white-space:nowrap;">5</div><svg style="position:absolute;left:593.75px;top:321.2px;overflow:visible;" width="31" height="11" viewBox="0 0 31 11"><rect x="0" y="0" width="31" height="11" fill="#5a5a5a"/><rect x="0" y="10" width="31" height="1" fill="#111"/><rect x="1.5" y="1.5" width="13" height="8" fill="#1f4c9e" stroke="#222" stroke-width="0.8"/><rect x="16.5" y="1.5" width="13" height="8" fill="#1f4c9e" stroke="#222" stroke-width="0.8"/><rect x="14.8" y="1" width="1.4" height="9" fill="#eee"/><circle cx="8" cy="5.5" r="2.6" fill="#bbb" stroke="#333" stroke-width="0.6"/><circle cx="23" cy="5.5" r="2.6" fill="#bbb" stroke="#333" stroke-width="0.6"/></svg><div style="position:absolute;left:580.75px;top:336.84px;font-size:12px;line-height:12px;height:12px;color:#111;font-weight:normal;white-space:nowrap;">6</div><svg style="position:absolute;left:593.75px;top:337.0px;overflow:visible;" width="31" height="11" viewBox="0 0 31 11"><rect x="0" y="0" width="31" height="11" fill="#5a5a5a"/><rect x="0" y="10" width="31" height="1" fill="#111"/><rect x="1.5" y="1.5" width="13" height="8" fill="#1f4c9e" stroke="#222" stroke-width="0.8"/><rect x="16.5" y="1.5" width="13" height="8" fill="#1f4c9e" stroke="#222" stroke-width="0.8"/><rect x="14.8" y="1" width="1.4" height="9" fill="#eee"/><circle cx="8" cy="5.5" r="2.6" fill="#bbb" stroke="#333" stroke-width="0.6"/><circle cx="23" cy="5.5" r="2.6" fill="#bbb" stroke="#333" stroke-width="0.6"/></svg><div style="position:absolute;left:653.5px;top:249.2px;width:90.5px;height:106.8px;border:1px solid #c2c2c2;background:linear-gradient(135deg,#f0f0f0,#e8e8e8);"></div><div style="position:absolute;left:653.5px;top:249.2px;width:90.5px;height:106.8px;display:flex;align-items:center;justify-content:center;"><div style="font-size:18px;font-weight:bold;color:#c4c4c4;margin-top:5px;">C</div></div><div style="position:absolute;left:743.25px;top:249.2px;width:90.5px;height:106.8px;border:1px solid #c2c2c2;background:linear-gradient(135deg,#f0f0f0,#e8e8e8);"></div><div style="position:absolute;left:743.25px;top:249.2px;width:90.5px;height:106.8px;display:flex;align-items:center;justify-content:center;"><div style="font-size:18px;font-weight:bold;color:#c4c4c4;margin-top:5px;">D</div></div><div style="position:absolute;left:833.0px;top:249.2px;width:90.5px;height:106.8px;border:1px solid #c2c2c2;background:linear-gradient(135deg,#f0f0f0,#e8e8e8);"></div><div style="position:absolute;left:833.0px;top:249.2px;width:90.5px;height:106.8px;display:flex;align-items:center;justify-content:center;"><div style="font-size:18px;font-weight:bold;color:#c4c4c4;margin-top:5px;">E</div></div><div style="position:absolute;left:922.75px;top:249.2px;width:90.5px;height:106.8px;border:1px solid #c2c2c2;background:linear-gradient(135deg,#f0f0f0,#e8e8e8);"></div><div style="position:absolute;left:922.75px;top:249.2px;width:90.5px;height:106.8px;display:flex;align-items:center;justify-content:center;"><div style="font-size:18px;font-weight:bold;color:#c4c4c4;margin-top:5px;">F</div></div><div style="position:absolute;left:1012.5px;top:249.2px;width:90.5px;height:106.8px;border:1px solid #c2c2c2;background:linear-gradient(135deg,#f0f0f0,#e8e8e8);"></div><div style="position:absolute;left:1012.5px;top:249.2px;width:90.5px;height:106.8px;display:flex;align-items:center;justify-content:center;"><div style="font-size:18px;font-weight:bold;color:#c4c4c4;margin-top:5px;">G</div></div><div style="position:absolute;left:1102.25px;top:249.2px;width:90.5px;height:106.8px;border:1px solid #c2c2c2;background:linear-gradient(135deg,#f0f0f0,#e8e8e8);"></div><div style="position:absolute;left:1102.25px;top:249.2px;width:90.5px;height:106.8px;display:flex;align-items:center;justify-content:center;"><div style="font-size:18px;font-weight:bold;color:#c4c4c4;margin-top:5px;">H</div></div><div style="position:absolute;left:472px;top:366px;width:721px;height:136px;background:#fff;"></div><div style="position:absolute;left:465px;top:367px;width:7px;height:135.5px;background:#b3b3b9;"></div><div style="position:absolute;left:1193px;top:367px;width:7px;height:135.5px;background:#b3b3b9;"></div><div style="position:absolute;left:473px;top:367px;width:719px;height:12px;background:linear-gradient(#90b7e4 0%,#88acd8 55%,#7f9cc0 88%,#7e8898 100%);"></div><div style="position:absolute;left:475.5px;top:367.83px;font-size:10.6px;line-height:10.6px;height:10.6px;color:#fff;font-weight:normal;white-space:nowrap;letter-spacing:0.1px;">PP-BIO-39</div><div style="position:absolute;left:1172.2px;top:368.58px;font-size:9px;line-height:9px;height:9px;color:#eef2f8;font-weight:normal;white-space:nowrap;">F</div><div style="position:absolute;left:1181.8px;top:368.58px;font-size:9px;line-height:9px;height:9px;color:#eef2f8;font-weight:normal;white-space:nowrap;">R</div><div style="position:absolute;left:473px;top:380px;width:719px;height:119px;background:linear-gradient(170deg,#f1f3f6,#e9edf2);"></div><div style="position:absolute;left:472px;top:500px;width:721px;height:1.6px;background:#b6b9c0;"></div><div style="position:absolute;left:474.0px;top:385.2px;width:90.5px;height:106.8px;border:1px solid #c2c2c2;background:linear-gradient(135deg,#fffcd8,#fffde8 60%,#fffccc);"></div><div style="position:absolute;left:491.0px;top:393.84px;font-size:12px;line-height:12px;height:12px;color:#111;font-weight:normal;white-space:nowrap;">1</div><svg style="position:absolute;left:504.0px;top:394.0px;overflow:visible;" width="31" height="11" viewBox="0 0 31 11"><rect x="0" y="0" width="31" height="11" fill="#5a5a5a"/><rect x="0" y="10" width="31" height="1" fill="#111"/><rect x="1.5" y="1.5" width="13" height="8" fill="#0e8a10" stroke="#222" stroke-width="0.8"/><rect x="16.5" y="1.5" width="13" height="8" fill="#0e8a10" stroke="#222" stroke-width="0.8"/><rect x="14.8" y="1" width="1.4" height="9" fill="#eee"/><circle cx="8" cy="5.5" r="2.6" fill="#bbb" stroke="#333" stroke-width="0.6"/><circle cx="23" cy="5.5" r="2.6" fill="#bbb" stroke="#333" stroke-width="0.6"/></svg><div style="position:absolute;left:491.0px;top:409.64px;font-size:12px;line-height:12px;height:12px;color:#111;font-weight:normal;white-space:nowrap;">2</div><svg style="position:absolute;left:504.0px;top:409.8px;overflow:visible;" width="31" height="11" viewBox="0 0 31 11"><rect x="0" y="0" width="31" height="11" fill="#5a5a5a"/><rect x="0" y="10" width="31" height="1" fill="#111"/><rect x="1.5" y="1.5" width="13" height="8" fill="#1f4c9e" stroke="#222" stroke-width="0.8"/><rect x="16.5" y="1.5" width="13" height="8" fill="#1f4c9e" stroke="#222" stroke-width="0.8"/><rect x="14.8" y="1" width="1.4" height="9" fill="#eee"/><circle cx="8" cy="5.5" r="2.6" fill="#bbb" stroke="#333" stroke-width="0.6"/><circle cx="23" cy="5.5" r="2.6" fill="#bbb" stroke="#333" stroke-width="0.6"/></svg><div style="position:absolute;left:491.0px;top:425.44px;font-size:12px;line-height:12px;height:12px;color:#111;font-weight:normal;white-space:nowrap;">3</div><svg style="position:absolute;left:504.0px;top:425.6px;overflow:visible;" width="31" height="11" viewBox="0 0 31 11"><rect x="0" y="0" width="31" height="11" fill="#5a5a5a"/><rect x="0" y="10" width="31" height="1" fill="#111"/><rect x="1.5" y="1.5" width="13" height="8" fill="#1f4c9e" stroke="#222" stroke-width="0.8"/><rect x="16.5" y="1.5" width="13" height="8" fill="#1f4c9e" stroke="#222" stroke-width="0.8"/><rect x="14.8" y="1" width="1.4" height="9" fill="#eee"/><circle cx="8" cy="5.5" r="2.6" fill="#bbb" stroke="#333" stroke-width="0.6"/><circle cx="23" cy="5.5" r="2.6" fill="#bbb" stroke="#333" stroke-width="0.6"/></svg><div style="position:absolute;left:491.0px;top:441.24px;font-size:12px;line-height:12px;height:12px;color:#111;font-weight:normal;white-space:nowrap;">4</div><svg style="position:absolute;left:504.0px;top:441.4px;overflow:visible;" width="31" height="11" viewBox="0 0 31 11"><rect x="0" y="0" width="31" height="11" fill="#5a5a5a"/><rect x="0" y="10" width="31" height="1" fill="#111"/><rect x="1.5" y="1.5" width="13" height="8" fill="#1f4c9e" stroke="#222" stroke-width="0.8"/><rect x="16.5" y="1.5" width="13" height="8" fill="#1f4c9e" stroke="#222" stroke-width="0.8"/><rect x="14.8" y="1" width="1.4" height="9" fill="#eee"/><circle cx="8" cy="5.5" r="2.6" fill="#bbb" stroke="#333" stroke-width="0.6"/><circle cx="23" cy="5.5" r="2.6" fill="#bbb" stroke="#333" stroke-width="0.6"/></svg><div style="position:absolute;left:491.0px;top:457.04px;font-size:12px;line-height:12px;height:12px;color:#111;font-weight:normal;white-space:nowrap;">5</div><svg style="position:absolute;left:504.0px;top:457.2px;overflow:visible;" width="31" height="11" viewBox="0 0 31 11"><rect x="0" y="0" width="31" height="11" fill="#5a5a5a"/><rect x="0" y="10" width="31" height="1" fill="#111"/><rect x="1.5" y="1.5" width="13" height="8" fill="#1f4c9e" stroke="#222" stroke-width="0.8"/><rect x="16.5" y="1.5" width="13" height="8" fill="#1f4c9e" stroke="#222" stroke-width="0.8"/><rect x="14.8" y="1" width="1.4" height="9" fill="#eee"/><circle cx="8" cy="5.5" r="2.6" fill="#bbb" stroke="#333" stroke-width="0.6"/><circle cx="23" cy="5.5" r="2.6" fill="#bbb" stroke="#333" stroke-width="0.6"/></svg><div style="position:absolute;left:491.0px;top:472.84px;font-size:12px;line-height:12px;height:12px;color:#111;font-weight:normal;white-space:nowrap;">6</div><svg style="position:absolute;left:504.0px;top:473.0px;overflow:visible;" width="31" height="11" viewBox="0 0 31 11"><rect x="0" y="0" width="31" height="11" fill="#5a5a5a"/><rect x="0" y="10" width="31" height="1" fill="#111"/><rect x="1.5" y="1.5" width="13" height="8" fill="#1f4c9e" stroke="#222" stroke-width="0.8"/><rect x="16.5" y="1.5" width="13" height="8" fill="#1f4c9e" stroke="#222" stroke-width="0.8"/><rect x="14.8" y="1" width="1.4" height="9" fill="#eee"/><circle cx="8" cy="5.5" r="2.6" fill="#bbb" stroke="#333" stroke-width="0.6"/><circle cx="23" cy="5.5" r="2.6" fill="#bbb" stroke="#333" stroke-width="0.6"/></svg><div style="position:absolute;left:563.75px;top:385.2px;width:90.5px;height:106.8px;border:1px solid #c2c2c2;background:linear-gradient(135deg,#fffcd8,#fffde8 60%,#fffccc);"></div><div style="position:absolute;left:580.75px;top:393.84px;font-size:12px;line-height:12px;height:12px;color:#111;font-weight:normal;white-space:nowrap;">1</div><svg style="position:absolute;left:593.75px;top:394.0px;overflow:visible;" width="31" height="11" viewBox="0 0 31 11"><rect x="0" y="0" width="31" height="11" fill="#5a5a5a"/><rect x="0" y="10" width="31" height="1" fill="#111"/><rect x="1.5" y="1.5" width="13" height="8" fill="#1f4c9e" stroke="#222" stroke-width="0.8"/><rect x="16.5" y="1.5" width="13" height="8" fill="#1f4c9e" stroke="#222" stroke-width="0.8"/><rect x="14.8" y="1" width="1.4" height="9" fill="#eee"/><circle cx="8" cy="5.5" r="2.6" fill="#bbb" stroke="#333" stroke-width="0.6"/><circle cx="23" cy="5.5" r="2.6" fill="#bbb" stroke="#333" stroke-width="0.6"/></svg><div style="position:absolute;left:580.75px;top:409.64px;font-size:12px;line-height:12px;height:12px;color:#111;font-weight:normal;white-space:nowrap;">2</div><svg style="position:absolute;left:593.75px;top:409.8px;overflow:visible;" width="31" height="11" viewBox="0 0 31 11"><rect x="0" y="0" width="31" height="11" fill="#5a5a5a"/><rect x="0" y="10" width="31" height="1" fill="#111"/><rect x="1.5" y="1.5" width="13" height="8" fill="#1f4c9e" stroke="#222" stroke-width="0.8"/><rect x="16.5" y="1.5" width="13" height="8" fill="#1f4c9e" stroke="#222" stroke-width="0.8"/><rect x="14.8" y="1" width="1.4" height="9" fill="#eee"/><circle cx="8" cy="5.5" r="2.6" fill="#bbb" stroke="#333" stroke-width="0.6"/><circle cx="23" cy="5.5" r="2.6" fill="#bbb" stroke="#333" stroke-width="0.6"/></svg><div style="position:absolute;left:580.75px;top:425.44px;font-size:12px;line-height:12px;height:12px;color:#111;font-weight:normal;white-space:nowrap;">3</div><svg style="position:absolute;left:593.75px;top:425.6px;overflow:visible;" width="31" height="11" viewBox="0 0 31 11"><rect x="0" y="0" width="31" height="11" fill="#5a5a5a"/><rect x="0" y="10" width="31" height="1" fill="#111"/><rect x="1.5" y="1.5" width="13" height="8" fill="#1f4c9e" stroke="#222" stroke-width="0.8"/><rect x="16.5" y="1.5" width="13" height="8" fill="#1f4c9e" stroke="#222" stroke-width="0.8"/><rect x="14.8" y="1" width="1.4" height="9" fill="#eee"/><circle cx="8" cy="5.5" r="2.6" fill="#bbb" stroke="#333" stroke-width="0.6"/><circle cx="23" cy="5.5" r="2.6" fill="#bbb" stroke="#333" stroke-width="0.6"/></svg><div style="position:absolute;left:580.75px;top:441.24px;font-size:12px;line-height:12px;height:12px;color:#111;font-weight:normal;white-space:nowrap;">4</div><svg style="position:absolute;left:593.75px;top:441.4px;overflow:visible;" width="31" height="11" viewBox="0 0 31 11"><rect x="0" y="0" width="31" height="11" fill="#5a5a5a"/><rect x="0" y="10" width="31" height="1" fill="#111"/><rect x="1.5" y="1.5" width="13" height="8" fill="#1f4c9e" stroke="#222" stroke-width="0.8"/><rect x="16.5" y="1.5" width="13" height="8" fill="#1f4c9e" stroke="#222" stroke-width="0.8"/><rect x="14.8" y="1" width="1.4" height="9" fill="#eee"/><circle cx="8" cy="5.5" r="2.6" fill="#bbb" stroke="#333" stroke-width="0.6"/><circle cx="23" cy="5.5" r="2.6" fill="#bbb" stroke="#333" stroke-width="0.6"/></svg><div style="position:absolute;left:580.75px;top:457.04px;font-size:12px;line-height:12px;height:12px;color:#111;font-weight:normal;white-space:nowrap;">5</div><svg style="position:absolute;left:593.75px;top:457.2px;overflow:visible;" width="31" height="11" viewBox="0 0 31 11"><rect x="0" y="0" width="31" height="11" fill="#5a5a5a"/><rect x="0" y="10" width="31" height="1" fill="#111"/><rect x="1.5" y="1.5" width="13" height="8" fill="#1f4c9e" stroke="#222" stroke-width="0.8"/><rect x="16.5" y="1.5" width="13" height="8" fill="#1f4c9e" stroke="#222" stroke-width="0.8"/><rect x="14.8" y="1" width="1.4" height="9" fill="#eee"/><circle cx="8" cy="5.5" r="2.6" fill="#bbb" stroke="#333" stroke-width="0.6"/><circle cx="23" cy="5.5" r="2.6" fill="#bbb" stroke="#333" stroke-width="0.6"/></svg><div style="position:absolute;left:580.75px;top:472.84px;font-size:12px;line-height:12px;height:12px;color:#111;font-weight:normal;white-space:nowrap;">6</div><svg style="position:absolute;left:593.75px;top:473.0px;overflow:visible;" width="31" height="11" viewBox="0 0 31 11"><rect x="0" y="0" width="31" height="11" fill="#5a5a5a"/><rect x="0" y="10" width="31" height="1" fill="#111"/><rect x="1.5" y="1.5" width="13" height="8" fill="#1f4c9e" stroke="#222" stroke-width="0.8"/><rect x="16.5" y="1.5" width="13" height="8" fill="#1f4c9e" stroke="#222" stroke-width="0.8"/><rect x="14.8" y="1" width="1.4" height="9" fill="#eee"/><circle cx="8" cy="5.5" r="2.6" fill="#bbb" stroke="#333" stroke-width="0.6"/><circle cx="23" cy="5.5" r="2.6" fill="#bbb" stroke="#333" stroke-width="0.6"/></svg><div style="position:absolute;left:653.5px;top:385.2px;width:90.5px;height:106.8px;border:1px solid #c2c2c2;background:linear-gradient(135deg,#f0f0f0,#e8e8e8);"></div><div style="position:absolute;left:653.5px;top:385.2px;width:90.5px;height:106.8px;display:flex;align-items:center;justify-content:center;"><div style="font-size:18px;font-weight:bold;color:#c4c4c4;margin-top:5px;">C</div></div><div style="position:absolute;left:743.25px;top:385.2px;width:90.5px;height:106.8px;border:1px solid #c2c2c2;background:linear-gradient(135deg,#f0f0f0,#e8e8e8);"></div><div style="position:absolute;left:743.25px;top:385.2px;width:90.5px;height:106.8px;display:flex;align-items:center;justify-content:center;"><div style="font-size:18px;font-weight:bold;color:#c4c4c4;margin-top:5px;">D</div></div><div style="position:absolute;left:833.0px;top:385.2px;width:90.5px;height:106.8px;border:1px solid #c2c2c2;background:linear-gradient(135deg,#f0f0f0,#e8e8e8);"></div><div style="position:absolute;left:833.0px;top:385.2px;width:90.5px;height:106.8px;display:flex;align-items:center;justify-content:center;"><div style="font-size:18px;font-weight:bold;color:#c4c4c4;margin-top:5px;">E</div></div><div style="position:absolute;left:922.75px;top:385.2px;width:90.5px;height:106.8px;border:1px solid #c2c2c2;background:linear-gradient(135deg,#f0f0f0,#e8e8e8);"></div><div style="position:absolute;left:922.75px;top:385.2px;width:90.5px;height:106.8px;display:flex;align-items:center;justify-content:center;"><div style="font-size:18px;font-weight:bold;color:#c4c4c4;margin-top:5px;">F</div></div><div style="position:absolute;left:1012.5px;top:385.2px;width:90.5px;height:106.8px;border:1px solid #c2c2c2;background:linear-gradient(135deg,#f0f0f0,#e8e8e8);"></div><div style="position:absolute;left:1012.5px;top:385.2px;width:90.5px;height:106.8px;display:flex;align-items:center;justify-content:center;"><div style="font-size:18px;font-weight:bold;color:#c4c4c4;margin-top:5px;">G</div></div><div style="position:absolute;left:1102.25px;top:385.2px;width:90.5px;height:106.8px;border:1px solid #c2c2c2;background:linear-gradient(135deg,#f0f0f0,#e8e8e8);"></div><div style="position:absolute;left:1102.25px;top:385.2px;width:90.5px;height:106.8px;display:flex;align-items:center;justify-content:center;"><div style="font-size:18px;font-weight:bold;color:#c4c4c4;margin-top:5px;">H</div></div><div style="position:absolute;left:472px;top:502px;width:721px;height:68px;background:#fff;"></div><div style="position:absolute;left:465px;top:503px;width:7px;height:67.5px;background:#b3b3b9;"></div><div style="position:absolute;left:1193px;top:503px;width:7px;height:67.5px;background:#b3b3b9;"></div><div style="position:absolute;left:473px;top:503px;width:719px;height:12px;background:linear-gradient(#90b7e4 0%,#88acd8 55%,#7f9cc0 88%,#7e8898 100%);"></div><div style="position:absolute;left:475.5px;top:503.83px;font-size:10.6px;line-height:10.6px;height:10.6px;color:#fff;font-weight:normal;white-space:nowrap;letter-spacing:0.32px;">Cable Management Panel</div><div style="position:absolute;left:1172.2px;top:504.58px;font-size:9px;line-height:9px;height:9px;color:#eef2f8;font-weight:normal;white-space:nowrap;">F</div><div style="position:absolute;left:1181.8px;top:504.58px;font-size:9px;line-height:9px;height:9px;color:#eef2f8;font-weight:normal;white-space:nowrap;">R</div><div style="position:absolute;left:473px;top:516px;width:719px;height:51px;background:linear-gradient(170deg,#f1f3f6,#e9edf2);"></div><div style="position:absolute;left:472px;top:568px;width:721px;height:1.6px;background:#b6b9c0;"></div><div style="position:absolute;left:232.5px;top:524.94px;width:1200px;text-align:center;font-size:40px;line-height:40px;height:40px;color:#bcbfc3;white-space:nowrap;transform:scaleX(0.99);transform-origin:50% 0;">Cable Management Panel</div><div style="position:absolute;left:472px;top:570px;width:721px;height:68px;background:#fff;"></div><div style="position:absolute;left:465px;top:571px;width:7px;height:67.5px;background:#b3b3b9;"></div><div style="position:absolute;left:1193px;top:571px;width:7px;height:67.5px;background:#b3b3b9;"></div><div style="position:absolute;left:473px;top:571px;width:719px;height:12px;background:linear-gradient(#90b7e4 0%,#88acd8 55%,#7f9cc0 88%,#7e8898 100%);"></div><div style="position:absolute;left:475.5px;top:571.83px;font-size:10.6px;line-height:10.6px;height:10.6px;color:#fff;font-weight:normal;white-space:nowrap;letter-spacing:0.32px;">SWBIO01</div><div style="position:absolute;left:1172.2px;top:572.58px;font-size:9px;line-height:9px;height:9px;color:#eef2f8;font-weight:normal;white-space:nowrap;">F</div><div style="position:absolute;left:1181.8px;top:572.58px;font-size:9px;line-height:9px;height:9px;color:#eef2f8;font-weight:normal;white-space:nowrap;">R</div><div style="position:absolute;left:473px;top:584px;width:719px;height:51px;background:linear-gradient(#e9eff7,#dfe8f3);"></div><div style="position:absolute;left:472px;top:636px;width:721px;height:1.6px;background:#b6b9c0;"></div><div style="position:absolute;left:523.7px;top:585.64px;font-size:12px;line-height:12px;height:12px;color:#111;font-weight:normal;white-space:nowrap;">1</div><svg style="position:absolute;left:521.0px;top:599.2px;overflow:visible;" width="12" height="11" viewBox="0 0 12 11"><path d="M3.5 0.6 H8.5 L11.5 3.2 V10.5 H0.5 V3.2 Z" fill="#0e8a10" stroke="#1d1d1d" stroke-width="1"/><rect x="2.5" y="7.3" width="7" height="1.9" fill="#cfd0a8"/></svg><svg style="position:absolute;left:521.0px;top:616px;overflow:visible;" width="12" height="11" viewBox="0 0 12 11"><path d="M0.5 0.5 H11.5 V7.6 L8.5 10.4 H3.5 L0.5 7.6 Z" fill="#0e8a10" stroke="#1d1d1d" stroke-width="1"/><rect x="2.5" y="1.6" width="7" height="1.9" fill="#cfd0a8"/></svg><div style="position:absolute;left:523.7px;top:626.24px;font-size:12px;line-height:12px;height:12px;color:#111;font-weight:normal;white-space:nowrap;">2</div><div style="position:absolute;left:544.7px;top:585.64px;font-size:12px;line-height:12px;height:12px;color:#111;font-weight:normal;white-space:nowrap;">3</div><svg style="position:absolute;left:542.0px;top:599.2px;overflow:visible;" width="12" height="11" viewBox="0 0 12 11"><path d="M3.5 0.6 H8.5 L11.5 3.2 V10.5 H0.5 V3.2 Z" fill="#0e8a10" stroke="#1d1d1d" stroke-width="1"/><rect x="2.5" y="7.3" width="7" height="1.9" fill="#cfd0a8"/></svg><svg style="position:absolute;left:542.0px;top:616px;overflow:visible;" width="12" height="11" viewBox="0 0 12 11"><path d="M0.5 0.5 H11.5 V7.6 L8.5 10.4 H3.5 L0.5 7.6 Z" fill="#0e8a10" stroke="#1d1d1d" stroke-width="1"/><rect x="2.5" y="1.6" width="7" height="1.9" fill="#cfd0a8"/></svg><div style="position:absolute;left:544.7px;top:626.24px;font-size:12px;line-height:12px;height:12px;color:#111;font-weight:normal;white-space:nowrap;">4</div><div style="position:absolute;left:565.7px;top:585.64px;font-size:12px;line-height:12px;height:12px;color:#111;font-weight:normal;white-space:nowrap;">5</div><svg style="position:absolute;left:563.0px;top:599.2px;overflow:visible;" width="12" height="11" viewBox="0 0 12 11"><path d="M3.5 0.6 H8.5 L11.5 3.2 V10.5 H0.5 V3.2 Z" fill="#0e8a10" stroke="#1d1d1d" stroke-width="1"/><rect x="2.5" y="7.3" width="7" height="1.9" fill="#cfd0a8"/></svg><svg style="position:absolute;left:563.0px;top:616px;overflow:visible;" width="12" height="11" viewBox="0 0 12 11"><path d="M0.5 0.5 H11.5 V7.6 L8.5 10.4 H3.5 L0.5 7.6 Z" fill="#0e8a10" stroke="#1d1d1d" stroke-width="1"/><rect x="2.5" y="1.6" width="7" height="1.9" fill="#cfd0a8"/></svg><div style="position:absolute;left:565.7px;top:626.24px;font-size:12px;line-height:12px;height:12px;color:#111;font-weight:normal;white-space:nowrap;">6</div><div style="position:absolute;left:586.7px;top:585.64px;font-size:12px;line-height:12px;height:12px;color:#111;font-weight:normal;white-space:nowrap;">7</div><svg style="position:absolute;left:584.0px;top:599.2px;overflow:visible;" width="12" height="11" viewBox="0 0 12 11"><path d="M3.5 0.6 H8.5 L11.5 3.2 V10.5 H0.5 V3.2 Z" fill="#0e8a10" stroke="#1d1d1d" stroke-width="1"/><rect x="2.5" y="7.3" width="7" height="1.9" fill="#cfd0a8"/></svg><svg style="position:absolute;left:584.0px;top:616px;overflow:visible;" width="12" height="11" viewBox="0 0 12 11"><path d="M0.5 0.5 H11.5 V7.6 L8.5 10.4 H3.5 L0.5 7.6 Z" fill="#0e8a10" stroke="#1d1d1d" stroke-width="1"/><rect x="2.5" y="1.6" width="7" height="1.9" fill="#cfd0a8"/></svg><div style="position:absolute;left:586.7px;top:626.24px;font-size:12px;line-height:12px;height:12px;color:#111;font-weight:normal;white-space:nowrap;">8</div><div style="position:absolute;left:607.7px;top:585.64px;font-size:12px;line-height:12px;height:12px;color:#111;font-weight:normal;white-space:nowrap;">9</div><svg style="position:absolute;left:605.0px;top:599.2px;overflow:visible;" width="12" height="11" viewBox="0 0 12 11"><path d="M3.5 0.6 H8.5 L11.5 3.2 V10.5 H0.5 V3.2 Z" fill="#0e8a10" stroke="#1d1d1d" stroke-width="1"/><rect x="2.5" y="7.3" width="7" height="1.9" fill="#cfd0a8"/></svg><svg style="position:absolute;left:605.0px;top:616px;overflow:visible;" width="12" height="11" viewBox="0 0 12 11"><path d="M0.5 0.5 H11.5 V7.6 L8.5 10.4 H3.5 L0.5 7.6 Z" fill="#0e8a10" stroke="#1d1d1d" stroke-width="1"/><rect x="2.5" y="1.6" width="7" height="1.9" fill="#cfd0a8"/></svg><div style="position:absolute;left:604.4px;top:626.24px;font-size:12px;line-height:12px;height:12px;color:#111;font-weight:normal;white-space:nowrap;">10</div><div style="position:absolute;left:625.4px;top:585.64px;font-size:12px;line-height:12px;height:12px;color:#111;font-weight:normal;white-space:nowrap;">11</div><svg style="position:absolute;left:626.0px;top:599.2px;overflow:visible;" width="12" height="11" viewBox="0 0 12 11"><path d="M3.5 0.6 H8.5 L11.5 3.2 V10.5 H0.5 V3.2 Z" fill="#0e8a10" stroke="#1d1d1d" stroke-width="1"/><rect x="2.5" y="7.3" width="7" height="1.9" fill="#cfd0a8"/></svg><svg style="position:absolute;left:626.0px;top:616px;overflow:visible;" width="12" height="11" viewBox="0 0 12 11"><path d="M0.5 0.5 H11.5 V7.6 L8.5 10.4 H3.5 L0.5 7.6 Z" fill="#0e8a10" stroke="#1d1d1d" stroke-width="1"/><rect x="2.5" y="1.6" width="7" height="1.9" fill="#cfd0a8"/></svg><div style="position:absolute;left:625.4px;top:626.24px;font-size:12px;line-height:12px;height:12px;color:#111;font-weight:normal;white-space:nowrap;">12</div><div style="position:absolute;left:654.4px;top:585.64px;font-size:12px;line-height:12px;height:12px;color:#111;font-weight:normal;white-space:nowrap;">13</div><svg style="position:absolute;left:655.0px;top:599.2px;overflow:visible;" width="12" height="11" viewBox="0 0 12 11"><path d="M3.5 0.6 H8.5 L11.5 3.2 V10.5 H0.5 V3.2 Z" fill="#0e8a10" stroke="#1d1d1d" stroke-width="1"/><rect x="2.5" y="7.3" width="7" height="1.9" fill="#cfd0a8"/></svg><svg style="position:absolute;left:655.0px;top:616px;overflow:visible;" width="12" height="11" viewBox="0 0 12 11"><path d="M0.5 0.5 H11.5 V7.6 L8.5 10.4 H3.5 L0.5 7.6 Z" fill="#0e8a10" stroke="#1d1d1d" stroke-width="1"/><rect x="2.5" y="1.6" width="7" height="1.9" fill="#cfd0a8"/></svg><div style="position:absolute;left:654.4px;top:626.24px;font-size:12px;line-height:12px;height:12px;color:#111;font-weight:normal;white-space:nowrap;">14</div><div style="position:absolute;left:675.4px;top:585.64px;font-size:12px;line-height:12px;height:12px;color:#111;font-weight:normal;white-space:nowrap;">15</div><svg style="position:absolute;left:676.0px;top:599.2px;overflow:visible;" width="12" height="11" viewBox="0 0 12 11"><path d="M3.5 0.6 H8.5 L11.5 3.2 V10.5 H0.5 V3.2 Z" fill="#0e8a10" stroke="#1d1d1d" stroke-width="1"/><rect x="2.5" y="7.3" width="7" height="1.9" fill="#cfd0a8"/></svg><svg style="position:absolute;left:676.0px;top:616px;overflow:visible;" width="12" height="11" viewBox="0 0 12 11"><path d="M0.5 0.5 H11.5 V7.6 L8.5 10.4 H3.5 L0.5 7.6 Z" fill="#1f4c9e" stroke="#1d1d1d" stroke-width="1"/><rect x="2.5" y="1.6" width="7" height="1.9" fill="#cfd0a8"/></svg><div style="position:absolute;left:675.4px;top:626.24px;font-size:12px;line-height:12px;height:12px;color:#111;font-weight:normal;white-space:nowrap;">16</div><div style="position:absolute;left:696.4px;top:585.64px;font-size:12px;line-height:12px;height:12px;color:#111;font-weight:normal;white-space:nowrap;">17</div><svg style="position:absolute;left:697.0px;top:599.2px;overflow:visible;" width="12" height="11" viewBox="0 0 12 11"><path d="M3.5 0.6 H8.5 L11.5 3.2 V10.5 H0.5 V3.2 Z" fill="#0e8a10" stroke="#1d1d1d" stroke-width="1"/><rect x="2.5" y="7.3" width="7" height="1.9" fill="#cfd0a8"/></svg><svg style="position:absolute;left:697.0px;top:616px;overflow:visible;" width="12" height="11" viewBox="0 0 12 11"><path d="M0.5 0.5 H11.5 V7.6 L8.5 10.4 H3.5 L0.5 7.6 Z" fill="#1f4c9e" stroke="#1d1d1d" stroke-width="1"/><rect x="2.5" y="1.6" width="7" height="1.9" fill="#cfd0a8"/></svg><div style="position:absolute;left:696.4px;top:626.24px;font-size:12px;line-height:12px;height:12px;color:#111;font-weight:normal;white-space:nowrap;">18</div><div style="position:absolute;left:717.4px;top:585.64px;font-size:12px;line-height:12px;height:12px;color:#111;font-weight:normal;white-space:nowrap;">19</div><svg style="position:absolute;left:718.0px;top:599.2px;overflow:visible;" width="12" height="11" viewBox="0 0 12 11"><path d="M3.5 0.6 H8.5 L11.5 3.2 V10.5 H0.5 V3.2 Z" fill="#0e8a10" stroke="#1d1d1d" stroke-width="1"/><rect x="2.5" y="7.3" width="7" height="1.9" fill="#cfd0a8"/></svg><svg style="position:absolute;left:718.0px;top:616px;overflow:visible;" width="12" height="11" viewBox="0 0 12 11"><path d="M0.5 0.5 H11.5 V7.6 L8.5 10.4 H3.5 L0.5 7.6 Z" fill="#1f4c9e" stroke="#1d1d1d" stroke-width="1"/><rect x="2.5" y="1.6" width="7" height="1.9" fill="#cfd0a8"/></svg><div style="position:absolute;left:717.4px;top:626.24px;font-size:12px;line-height:12px;height:12px;color:#111;font-weight:normal;white-space:nowrap;">20</div><div style="position:absolute;left:738.4px;top:585.64px;font-size:12px;line-height:12px;height:12px;color:#111;font-weight:normal;white-space:nowrap;">21</div><svg style="position:absolute;left:739.0px;top:599.2px;overflow:visible;" width="12" height="11" viewBox="0 0 12 11"><path d="M3.5 0.6 H8.5 L11.5 3.2 V10.5 H0.5 V3.2 Z" fill="#0e8a10" stroke="#1d1d1d" stroke-width="1"/><rect x="2.5" y="7.3" width="7" height="1.9" fill="#cfd0a8"/></svg><svg style="position:absolute;left:739.0px;top:616px;overflow:visible;" width="12" height="11" viewBox="0 0 12 11"><path d="M0.5 0.5 H11.5 V7.6 L8.5 10.4 H3.5 L0.5 7.6 Z" fill="#1f4c9e" stroke="#1d1d1d" stroke-width="1"/><rect x="2.5" y="1.6" width="7" height="1.9" fill="#cfd0a8"/></svg><div style="position:absolute;left:738.4px;top:626.24px;font-size:12px;line-height:12px;height:12px;color:#111;font-weight:normal;white-space:nowrap;">22</div><div style="position:absolute;left:759.4px;top:585.64px;font-size:12px;line-height:12px;height:12px;color:#111;font-weight:normal;white-space:nowrap;">23</div><svg style="position:absolute;left:760.0px;top:599.2px;overflow:visible;" width="12" height="11" viewBox="0 0 12 11"><path d="M3.5 0.6 H8.5 L11.5 3.2 V10.5 H0.5 V3.2 Z" fill="#0e8a10" stroke="#1d1d1d" stroke-width="1"/><rect x="2.5" y="7.3" width="7" height="1.9" fill="#cfd0a8"/></svg><svg style="position:absolute;left:760.0px;top:616px;overflow:visible;" width="12" height="11" viewBox="0 0 12 11"><path d="M0.5 0.5 H11.5 V7.6 L8.5 10.4 H3.5 L0.5 7.6 Z" fill="#1f4c9e" stroke="#1d1d1d" stroke-width="1"/><rect x="2.5" y="1.6" width="7" height="1.9" fill="#cfd0a8"/></svg><div style="position:absolute;left:759.4px;top:626.24px;font-size:12px;line-height:12px;height:12px;color:#111;font-weight:normal;white-space:nowrap;">24</div><div style="position:absolute;left:790.4px;top:585.64px;font-size:12px;line-height:12px;height:12px;color:#111;font-weight:normal;white-space:nowrap;">25</div><svg style="position:absolute;left:791.0px;top:599.2px;overflow:visible;" width="12" height="11" viewBox="0 0 12 11"><path d="M3.5 0.6 H8.5 L11.5 3.2 V10.5 H0.5 V3.2 Z" fill="#0e8a10" stroke="#1d1d1d" stroke-width="1"/><rect x="2.5" y="7.3" width="7" height="1.9" fill="#cfd0a8"/></svg><svg style="position:absolute;left:791.0px;top:616px;overflow:visible;" width="12" height="11" viewBox="0 0 12 11"><path d="M0.5 0.5 H11.5 V7.6 L8.5 10.4 H3.5 L0.5 7.6 Z" fill="#1f4c9e" stroke="#1d1d1d" stroke-width="1"/><rect x="2.5" y="1.6" width="7" height="1.9" fill="#cfd0a8"/></svg><div style="position:absolute;left:790.4px;top:626.24px;font-size:12px;line-height:12px;height:12px;color:#111;font-weight:normal;white-space:nowrap;">26</div><div style="position:absolute;left:811.6px;top:585.64px;font-size:12px;line-height:12px;height:12px;color:#111;font-weight:normal;white-space:nowrap;">27</div><svg style="position:absolute;left:812.2px;top:599.2px;overflow:visible;" width="12" height="11" viewBox="0 0 12 11"><path d="M3.5 0.6 H8.5 L11.5 3.2 V10.5 H0.5 V3.2 Z" fill="#1f4c9e" stroke="#1d1d1d" stroke-width="1"/><rect x="2.5" y="7.3" width="7" height="1.9" fill="#cfd0a8"/></svg><svg style="position:absolute;left:812.2px;top:616px;overflow:visible;" width="12" height="11" viewBox="0 0 12 11"><path d="M0.5 0.5 H11.5 V7.6 L8.5 10.4 H3.5 L0.5 7.6 Z" fill="#1f4c9e" stroke="#1d1d1d" stroke-width="1"/><rect x="2.5" y="1.6" width="7" height="1.9" fill="#cfd0a8"/></svg><div style="position:absolute;left:811.6px;top:626.24px;font-size:12px;line-height:12px;height:12px;color:#111;font-weight:normal;white-space:nowrap;">28</div><div style="position:absolute;left:832.8px;top:585.64px;font-size:12px;line-height:12px;height:12px;color:#111;font-weight:normal;white-space:nowrap;">29</div><svg style="position:absolute;left:833.4px;top:599.2px;overflow:visible;" width="12" height="11" viewBox="0 0 12 11"><path d="M3.5 0.6 H8.5 L11.5 3.2 V10.5 H0.5 V3.2 Z" fill="#1f4c9e" stroke="#1d1d1d" stroke-width="1"/><rect x="2.5" y="7.3" width="7" height="1.9" fill="#cfd0a8"/></svg><svg style="position:absolute;left:833.4px;top:616px;overflow:visible;" width="12" height="11" viewBox="0 0 12 11"><path d="M0.5 0.5 H11.5 V7.6 L8.5 10.4 H3.5 L0.5 7.6 Z" fill="#1f4c9e" stroke="#1d1d1d" stroke-width="1"/><rect x="2.5" y="1.6" width="7" height="1.9" fill="#cfd0a8"/></svg><div style="position:absolute;left:832.8px;top:626.24px;font-size:12px;line-height:12px;height:12px;color:#111;font-weight:normal;white-space:nowrap;">30</div><div style="position:absolute;left:854.0px;top:585.64px;font-size:12px;line-height:12px;height:12px;color:#111;font-weight:normal;white-space:nowrap;">31</div><svg style="position:absolute;left:854.6px;top:599.2px;overflow:visible;" width="12" height="11" viewBox="0 0 12 11"><path d="M3.5 0.6 H8.5 L11.5 3.2 V10.5 H0.5 V3.2 Z" fill="#1f4c9e" stroke="#1d1d1d" stroke-width="1"/><rect x="2.5" y="7.3" width="7" height="1.9" fill="#cfd0a8"/></svg><svg style="position:absolute;left:854.6px;top:616px;overflow:visible;" width="12" height="11" viewBox="0 0 12 11"><path d="M0.5 0.5 H11.5 V7.6 L8.5 10.4 H3.5 L0.5 7.6 Z" fill="#1f4c9e" stroke="#1d1d1d" stroke-width="1"/><rect x="2.5" y="1.6" width="7" height="1.9" fill="#cfd0a8"/></svg><div style="position:absolute;left:854.0px;top:626.24px;font-size:12px;line-height:12px;height:12px;color:#111;font-weight:normal;white-space:nowrap;">32</div><div style="position:absolute;left:875.1999999999999px;top:585.64px;font-size:12px;line-height:12px;height:12px;color:#111;font-weight:normal;white-space:nowrap;">33</div><svg style="position:absolute;left:875.8px;top:599.2px;overflow:visible;" width="12" height="11" viewBox="0 0 12 11"><path d="M3.5 0.6 H8.5 L11.5 3.2 V10.5 H0.5 V3.2 Z" fill="#1f4c9e" stroke="#1d1d1d" stroke-width="1"/><rect x="2.5" y="7.3" width="7" height="1.9" fill="#cfd0a8"/></svg><svg style="position:absolute;left:875.8px;top:616px;overflow:visible;" width="12" height="11" viewBox="0 0 12 11"><path d="M0.5 0.5 H11.5 V7.6 L8.5 10.4 H3.5 L0.5 7.6 Z" fill="#1f4c9e" stroke="#1d1d1d" stroke-width="1"/><rect x="2.5" y="1.6" width="7" height="1.9" fill="#cfd0a8"/></svg><div style="position:absolute;left:875.1999999999999px;top:626.24px;font-size:12px;line-height:12px;height:12px;color:#111;font-weight:normal;white-space:nowrap;">34</div><div style="position:absolute;left:896.4px;top:585.64px;font-size:12px;line-height:12px;height:12px;color:#111;font-weight:normal;white-space:nowrap;">35</div><svg style="position:absolute;left:897.0px;top:599.2px;overflow:visible;" width="12" height="11" viewBox="0 0 12 11"><path d="M3.5 0.6 H8.5 L11.5 3.2 V10.5 H0.5 V3.2 Z" fill="#1f4c9e" stroke="#1d1d1d" stroke-width="1"/><rect x="2.5" y="7.3" width="7" height="1.9" fill="#cfd0a8"/></svg><svg style="position:absolute;left:897.0px;top:616px;overflow:visible;" width="12" height="11" viewBox="0 0 12 11"><path d="M0.5 0.5 H11.5 V7.6 L8.5 10.4 H3.5 L0.5 7.6 Z" fill="#1f4c9e" stroke="#1d1d1d" stroke-width="1"/><rect x="2.5" y="1.6" width="7" height="1.9" fill="#cfd0a8"/></svg><div style="position:absolute;left:896.4px;top:626.24px;font-size:12px;line-height:12px;height:12px;color:#111;font-weight:normal;white-space:nowrap;">36</div><div style="position:absolute;left:924.4px;top:585.64px;font-size:12px;line-height:12px;height:12px;color:#111;font-weight:normal;white-space:nowrap;">37</div><svg style="position:absolute;left:925.0px;top:599.2px;overflow:visible;" width="12" height="11" viewBox="0 0 12 11"><path d="M3.5 0.6 H8.5 L11.5 3.2 V10.5 H0.5 V3.2 Z" fill="#1f4c9e" stroke="#1d1d1d" stroke-width="1"/><rect x="2.5" y="7.3" width="7" height="1.9" fill="#cfd0a8"/></svg><svg style="position:absolute;left:925.0px;top:616px;overflow:visible;" width="12" height="11" viewBox="0 0 12 11"><path d="M0.5 0.5 H11.5 V7.6 L8.5 10.4 H3.5 L0.5 7.6 Z" fill="#1f4c9e" stroke="#1d1d1d" stroke-width="1"/><rect x="2.5" y="1.6" width="7" height="1.9" fill="#cfd0a8"/></svg><div style="position:absolute;left:924.4px;top:626.24px;font-size:12px;line-height:12px;height:12px;color:#111;font-weight:normal;white-space:nowrap;">38</div><div style="position:absolute;left:945.8px;top:585.64px;font-size:12px;line-height:12px;height:12px;color:#111;font-weight:normal;white-space:nowrap;">39</div><svg style="position:absolute;left:946.4px;top:599.2px;overflow:visible;" width="12" height="11" viewBox="0 0 12 11"><path d="M3.5 0.6 H8.5 L11.5 3.2 V10.5 H0.5 V3.2 Z" fill="#1f4c9e" stroke="#1d1d1d" stroke-width="1"/><rect x="2.5" y="7.3" width="7" height="1.9" fill="#cfd0a8"/></svg><svg style="position:absolute;left:946.4px;top:616px;overflow:visible;" width="12" height="11" viewBox="0 0 12 11"><path d="M0.5 0.5 H11.5 V7.6 L8.5 10.4 H3.5 L0.5 7.6 Z" fill="#1f4c9e" stroke="#1d1d1d" stroke-width="1"/><rect x="2.5" y="1.6" width="7" height="1.9" fill="#cfd0a8"/></svg><div style="position:absolute;left:945.8px;top:626.24px;font-size:12px;line-height:12px;height:12px;color:#111;font-weight:normal;white-space:nowrap;">40</div><div style="position:absolute;left:967.1999999999999px;top:585.64px;font-size:12px;line-height:12px;height:12px;color:#111;font-weight:normal;white-space:nowrap;">41</div><svg style="position:absolute;left:967.8px;top:599.2px;overflow:visible;" width="12" height="11" viewBox="0 0 12 11"><path d="M3.5 0.6 H8.5 L11.5 3.2 V10.5 H0.5 V3.2 Z" fill="#1f4c9e" stroke="#1d1d1d" stroke-width="1"/><rect x="2.5" y="7.3" width="7" height="1.9" fill="#cfd0a8"/></svg><svg style="position:absolute;left:967.8px;top:616px;overflow:visible;" width="12" height="11" viewBox="0 0 12 11"><path d="M0.5 0.5 H11.5 V7.6 L8.5 10.4 H3.5 L0.5 7.6 Z" fill="#1f4c9e" stroke="#1d1d1d" stroke-width="1"/><rect x="2.5" y="1.6" width="7" height="1.9" fill="#cfd0a8"/></svg><div style="position:absolute;left:967.1999999999999px;top:626.24px;font-size:12px;line-height:12px;height:12px;color:#111;font-weight:normal;white-space:nowrap;">42</div><div style="position:absolute;left:988.6px;top:585.64px;font-size:12px;line-height:12px;height:12px;color:#111;font-weight:normal;white-space:nowrap;">43</div><svg style="position:absolute;left:989.2px;top:599.2px;overflow:visible;" width="12" height="11" viewBox="0 0 12 11"><path d="M3.5 0.6 H8.5 L11.5 3.2 V10.5 H0.5 V3.2 Z" fill="#1f4c9e" stroke="#1d1d1d" stroke-width="1"/><rect x="2.5" y="7.3" width="7" height="1.9" fill="#cfd0a8"/></svg><svg style="position:absolute;left:989.2px;top:616px;overflow:visible;" width="12" height="11" viewBox="0 0 12 11"><path d="M0.5 0.5 H11.5 V7.6 L8.5 10.4 H3.5 L0.5 7.6 Z" fill="#1f4c9e" stroke="#1d1d1d" stroke-width="1"/><rect x="2.5" y="1.6" width="7" height="1.9" fill="#cfd0a8"/></svg><div style="position:absolute;left:988.6px;top:626.24px;font-size:12px;line-height:12px;height:12px;color:#111;font-weight:normal;white-space:nowrap;">44</div><div style="position:absolute;left:1010.0px;top:585.64px;font-size:12px;line-height:12px;height:12px;color:#111;font-weight:normal;white-space:nowrap;">45</div><svg style="position:absolute;left:1010.6px;top:599.2px;overflow:visible;" width="12" height="11" viewBox="0 0 12 11"><path d="M3.5 0.6 H8.5 L11.5 3.2 V10.5 H0.5 V3.2 Z" fill="#1f4c9e" stroke="#1d1d1d" stroke-width="1"/><rect x="2.5" y="7.3" width="7" height="1.9" fill="#cfd0a8"/></svg><svg style="position:absolute;left:1010.6px;top:616px;overflow:visible;" width="12" height="11" viewBox="0 0 12 11"><path d="M0.5 0.5 H11.5 V7.6 L8.5 10.4 H3.5 L0.5 7.6 Z" fill="#1f4c9e" stroke="#1d1d1d" stroke-width="1"/><rect x="2.5" y="1.6" width="7" height="1.9" fill="#cfd0a8"/></svg><div style="position:absolute;left:1010.0px;top:626.24px;font-size:12px;line-height:12px;height:12px;color:#111;font-weight:normal;white-space:nowrap;">46</div><div style="position:absolute;left:1031.4px;top:585.64px;font-size:12px;line-height:12px;height:12px;color:#111;font-weight:normal;white-space:nowrap;">47</div><svg style="position:absolute;left:1032.0px;top:599.2px;overflow:visible;" width="12" height="11" viewBox="0 0 12 11"><path d="M3.5 0.6 H8.5 L11.5 3.2 V10.5 H0.5 V3.2 Z" fill="#1f4c9e" stroke="#1d1d1d" stroke-width="1"/><rect x="2.5" y="7.3" width="7" height="1.9" fill="#cfd0a8"/></svg><svg style="position:absolute;left:1032.0px;top:616px;overflow:visible;" width="12" height="11" viewBox="0 0 12 11"><path d="M0.5 0.5 H11.5 V7.6 L8.5 10.4 H3.5 L0.5 7.6 Z" fill="#1f4c9e" stroke="#1d1d1d" stroke-width="1"/><rect x="2.5" y="1.6" width="7" height="1.9" fill="#cfd0a8"/></svg><div style="position:absolute;left:1031.4px;top:626.24px;font-size:12px;line-height:12px;height:12px;color:#111;font-weight:normal;white-space:nowrap;">48</div><div style="position:absolute;left:1057px;top:583.07px;font-size:11.5px;line-height:11.5px;height:11.5px;color:#111;font-weight:normal;white-space:nowrap;">Console 1</div><div style="position:absolute;left:1117.5px;top:583.07px;font-size:11.5px;line-height:11.5px;height:11.5px;color:#111;font-weight:normal;white-space:nowrap;">USB 1</div><div style="position:absolute;left:1081px;top:596.5px;width:5px;height:2.5px;background:#888;border-radius:1px;"></div><div style="position:absolute;left:1126px;top:596.7px;width:15px;height:7px;background:#23408a;border:1px solid #111;"></div><div style="position:absolute;left:1069px;top:602.54px;font-size:12px;line-height:12px;height:12px;color:#111;font-weight:normal;white-space:nowrap;">49</div><div style="position:absolute;left:1090.5px;top:602.54px;font-size:12px;line-height:12px;height:12px;color:#111;font-weight:normal;white-space:nowrap;">50</div><div style="position:absolute;left:1063.8px;top:613.3px;width:21px;height:13px;border:1px solid #bdbdbd;background:#ececec;"></div><div style="position:absolute;left:1084.2px;top:613.3px;width:21px;height:13px;border:1px solid #bdbdbd;background:#ececec;"></div><div style="position:absolute;left:1104.6px;top:613.3px;width:21px;height:13px;border:1px solid #bdbdbd;background:#ececec;"></div><div style="position:absolute;left:1125.0px;top:613.3px;width:21px;height:13px;border:1px solid #bdbdbd;background:#ececec;"></div><svg style="position:absolute;left:1066.0px;top:615.5px;overflow:visible;" width="16" height="9" viewBox="0 0 16 9"><rect x="0.5" y="0.5" width="15" height="8" fill="#777" stroke="#333" stroke-width="0.8"/><circle cx="4.5" cy="3.5" r="2.5" fill="#0e8a10"/><circle cx="11.5" cy="3.5" r="2.5" fill="#0e8a10"/><rect x="1.5" y="5.5" width="13" height="2.5" fill="#444"/></svg><svg style="position:absolute;left:1086.4px;top:615.5px;overflow:visible;" width="16" height="9" viewBox="0 0 16 9"><rect x="0.5" y="0.5" width="15" height="8" fill="#777" stroke="#333" stroke-width="0.8"/><circle cx="4.5" cy="3.5" r="2.5" fill="#0e8a10"/><circle cx="11.5" cy="3.5" r="2.5" fill="#0e8a10"/><rect x="1.5" y="5.5" width="13" height="2.5" fill="#444"/></svg><div style="position:absolute;left:472px;top:638px;width:721px;height:136px;background:#fff;"></div><div style="position:absolute;left:465px;top:639px;width:7px;height:135.5px;background:#b3b3b9;"></div><div style="position:absolute;left:1193px;top:639px;width:7px;height:135.5px;background:#b3b3b9;"></div><div style="position:absolute;left:473px;top:639px;width:719px;height:12px;background:linear-gradient(#90b7e4 0%,#88acd8 55%,#7f9cc0 88%,#7e8898 100%);"></div><div style="position:absolute;left:475.5px;top:639.83px;font-size:10.6px;line-height:10.6px;height:10.6px;color:#fff;font-weight:normal;white-space:nowrap;letter-spacing:0.32px;">Cable Management Panel</div><div style="position:absolute;left:1172.2px;top:640.58px;font-size:9px;line-height:9px;height:9px;color:#eef2f8;font-weight:normal;white-space:nowrap;">F</div><div style="position:absolute;left:1181.8px;top:640.58px;font-size:9px;line-height:9px;height:9px;color:#eef2f8;font-weight:normal;white-space:nowrap;">R</div><div style="position:absolute;left:473px;top:652px;width:719px;height:119px;background:linear-gradient(170deg,#f1f3f6,#e9edf2);"></div><div style="position:absolute;left:472px;top:772px;width:721px;height:1.6px;background:#b6b9c0;"></div><div style="position:absolute;left:232px;top:687.69px;width:1200px;text-align:center;font-size:54px;line-height:54px;height:54px;color:#babdc1;white-space:nowrap;transform:scaleX(0.966);transform-origin:50% 0;">Cable Management Panel</div><div style="position:absolute;left:472px;top:774px;width:721px;height:68px;background:#fff;"></div><div style="position:absolute;left:465px;top:775px;width:7px;height:67.5px;background:#b3b3b9;"></div><div style="position:absolute;left:1193px;top:775px;width:7px;height:67.5px;background:#b3b3b9;"></div><div style="position:absolute;left:473px;top:775px;width:719px;height:12px;background:linear-gradient(#90b7e4 0%,#88acd8 55%,#7f9cc0 88%,#7e8898 100%);"></div><div style="position:absolute;left:475.5px;top:775.83px;font-size:10.6px;line-height:10.6px;height:10.6px;color:#fff;font-weight:normal;white-space:nowrap;letter-spacing:0.1px;">PP-BIO-33</div><div style="position:absolute;left:1172.2px;top:776.58px;font-size:9px;line-height:9px;height:9px;color:#eef2f8;font-weight:normal;white-space:nowrap;">F</div><div style="position:absolute;left:1181.8px;top:776.58px;font-size:9px;line-height:9px;height:9px;color:#eef2f8;font-weight:normal;white-space:nowrap;">R</div><div style="position:absolute;left:473px;top:788px;width:719px;height:51px;background:linear-gradient(170deg,#f1f3f6,#e9edf2);"></div><div style="position:absolute;left:472px;top:840px;width:721px;height:1.6px;background:#b6b9c0;"></div><div style="position:absolute;left:494.7px;top:798.84px;font-size:12px;line-height:12px;height:12px;color:#111;font-weight:normal;white-space:nowrap;">1</div><svg style="position:absolute;left:492.0px;top:812.4px;overflow:visible;" width="12" height="11" viewBox="0 0 12 11"><path d="M0.5 1.5 Q0.5 0.5 1.5 0.5 H10.5 Q11.5 0.5 11.5 1.5 V7 L8.5 9.5 V10.5 H3.5 V9.5 L0.5 7 Z" fill="#0e8a10" stroke="#1d1d1d" stroke-width="1"/><rect x="2.5" y="1.6" width="7" height="1.8" fill="#cfd0a8"/></svg><div style="position:absolute;left:523.25px;top:798.84px;font-size:12px;line-height:12px;height:12px;color:#111;font-weight:normal;white-space:nowrap;">2</div><svg style="position:absolute;left:520.55px;top:812.4px;overflow:visible;" width="12" height="11" viewBox="0 0 12 11"><path d="M0.5 1.5 Q0.5 0.5 1.5 0.5 H10.5 Q11.5 0.5 11.5 1.5 V7 L8.5 9.5 V10.5 H3.5 V9.5 L0.5 7 Z" fill="#1f4c9e" stroke="#1d1d1d" stroke-width="1"/><rect x="2.5" y="1.6" width="7" height="1.8" fill="#cfd0a8"/></svg><div style="position:absolute;left:551.8000000000001px;top:798.84px;font-size:12px;line-height:12px;height:12px;color:#111;font-weight:normal;white-space:nowrap;">3</div><svg style="position:absolute;left:549.1px;top:812.4px;overflow:visible;" width="12" height="11" viewBox="0 0 12 11"><path d="M0.5 1.5 Q0.5 0.5 1.5 0.5 H10.5 Q11.5 0.5 11.5 1.5 V7 L8.5 9.5 V10.5 H3.5 V9.5 L0.5 7 Z" fill="#0e8a10" stroke="#1d1d1d" stroke-width="1"/><rect x="2.5" y="1.6" width="7" height="1.8" fill="#cfd0a8"/></svg><div style="position:absolute;left:580.35px;top:798.84px;font-size:12px;line-height:12px;height:12px;color:#111;font-weight:normal;white-space:nowrap;">4</div><svg style="position:absolute;left:577.65px;top:812.4px;overflow:visible;" width="12" height="11" viewBox="0 0 12 11"><path d="M0.5 1.5 Q0.5 0.5 1.5 0.5 H10.5 Q11.5 0.5 11.5 1.5 V7 L8.5 9.5 V10.5 H3.5 V9.5 L0.5 7 Z" fill="#0e8a10" stroke="#1d1d1d" stroke-width="1"/><rect x="2.5" y="1.6" width="7" height="1.8" fill="#cfd0a8"/></svg><div style="position:absolute;left:608.9000000000001px;top:798.84px;font-size:12px;line-height:12px;height:12px;color:#111;font-weight:normal;white-space:nowrap;">5</div><svg style="position:absolute;left:606.2px;top:812.4px;overflow:visible;" width="12" height="11" viewBox="0 0 12 11"><path d="M0.5 1.5 Q0.5 0.5 1.5 0.5 H10.5 Q11.5 0.5 11.5 1.5 V7 L8.5 9.5 V10.5 H3.5 V9.5 L0.5 7 Z" fill="#0e8a10" stroke="#1d1d1d" stroke-width="1"/><rect x="2.5" y="1.6" width="7" height="1.8" fill="#cfd0a8"/></svg><div style="position:absolute;left:637.45px;top:798.84px;font-size:12px;line-height:12px;height:12px;color:#111;font-weight:normal;white-space:nowrap;">6</div><svg style="position:absolute;left:634.75px;top:812.4px;overflow:visible;" width="12" height="11" viewBox="0 0 12 11"><path d="M0.5 1.5 Q0.5 0.5 1.5 0.5 H10.5 Q11.5 0.5 11.5 1.5 V7 L8.5 9.5 V10.5 H3.5 V9.5 L0.5 7 Z" fill="#1f4c9e" stroke="#1d1d1d" stroke-width="1"/><rect x="2.5" y="1.6" width="7" height="1.8" fill="#cfd0a8"/></svg><div style="position:absolute;left:666.0px;top:798.84px;font-size:12px;line-height:12px;height:12px;color:#111;font-weight:normal;white-space:nowrap;">7</div><svg style="position:absolute;left:663.3px;top:812.4px;overflow:visible;" width="12" height="11" viewBox="0 0 12 11"><path d="M0.5 1.5 Q0.5 0.5 1.5 0.5 H10.5 Q11.5 0.5 11.5 1.5 V7 L8.5 9.5 V10.5 H3.5 V9.5 L0.5 7 Z" fill="#0e8a10" stroke="#1d1d1d" stroke-width="1"/><rect x="2.5" y="1.6" width="7" height="1.8" fill="#cfd0a8"/></svg><div style="position:absolute;left:694.5500000000001px;top:798.84px;font-size:12px;line-height:12px;height:12px;color:#111;font-weight:normal;white-space:nowrap;">8</div><svg style="position:absolute;left:691.85px;top:812.4px;overflow:visible;" width="12" height="11" viewBox="0 0 12 11"><path d="M0.5 1.5 Q0.5 0.5 1.5 0.5 H10.5 Q11.5 0.5 11.5 1.5 V7 L8.5 9.5 V10.5 H3.5 V9.5 L0.5 7 Z" fill="#1f4c9e" stroke="#1d1d1d" stroke-width="1"/><rect x="2.5" y="1.6" width="7" height="1.8" fill="#cfd0a8"/></svg><div style="position:absolute;left:723.1px;top:798.84px;font-size:12px;line-height:12px;height:12px;color:#111;font-weight:normal;white-space:nowrap;">9</div><svg style="position:absolute;left:720.4px;top:812.4px;overflow:visible;" width="12" height="11" viewBox="0 0 12 11"><path d="M0.5 1.5 Q0.5 0.5 1.5 0.5 H10.5 Q11.5 0.5 11.5 1.5 V7 L8.5 9.5 V10.5 H3.5 V9.5 L0.5 7 Z" fill="#0e8a10" stroke="#1d1d1d" stroke-width="1"/><rect x="2.5" y="1.6" width="7" height="1.8" fill="#cfd0a8"/></svg><div style="position:absolute;left:748.35px;top:798.84px;font-size:12px;line-height:12px;height:12px;color:#111;font-weight:normal;white-space:nowrap;">10</div><svg style="position:absolute;left:748.95px;top:812.4px;overflow:visible;" width="12" height="11" viewBox="0 0 12 11"><path d="M0.5 1.5 Q0.5 0.5 1.5 0.5 H10.5 Q11.5 0.5 11.5 1.5 V7 L8.5 9.5 V10.5 H3.5 V9.5 L0.5 7 Z" fill="#1f4c9e" stroke="#1d1d1d" stroke-width="1"/><rect x="2.5" y="1.6" width="7" height="1.8" fill="#cfd0a8"/></svg><div style="position:absolute;left:776.9px;top:798.84px;font-size:12px;line-height:12px;height:12px;color:#111;font-weight:normal;white-space:nowrap;">11</div><svg style="position:absolute;left:777.5px;top:812.4px;overflow:visible;" width="12" height="11" viewBox="0 0 12 11"><path d="M0.5 1.5 Q0.5 0.5 1.5 0.5 H10.5 Q11.5 0.5 11.5 1.5 V7 L8.5 9.5 V10.5 H3.5 V9.5 L0.5 7 Z" fill="#0e8a10" stroke="#1d1d1d" stroke-width="1"/><rect x="2.5" y="1.6" width="7" height="1.8" fill="#cfd0a8"/></svg><div style="position:absolute;left:805.4499999999999px;top:798.84px;font-size:12px;line-height:12px;height:12px;color:#111;font-weight:normal;white-space:nowrap;">12</div><svg style="position:absolute;left:806.05px;top:812.4px;overflow:visible;" width="12" height="11" viewBox="0 0 12 11"><path d="M0.5 1.5 Q0.5 0.5 1.5 0.5 H10.5 Q11.5 0.5 11.5 1.5 V7 L8.5 9.5 V10.5 H3.5 V9.5 L0.5 7 Z" fill="#1f4c9e" stroke="#1d1d1d" stroke-width="1"/><rect x="2.5" y="1.6" width="7" height="1.8" fill="#cfd0a8"/></svg><div style="position:absolute;left:834.0px;top:798.84px;font-size:12px;line-height:12px;height:12px;color:#111;font-weight:normal;white-space:nowrap;">13</div><svg style="position:absolute;left:834.6px;top:812.4px;overflow:visible;" width="12" height="11" viewBox="0 0 12 11"><path d="M0.5 1.5 Q0.5 0.5 1.5 0.5 H10.5 Q11.5 0.5 11.5 1.5 V7 L8.5 9.5 V10.5 H3.5 V9.5 L0.5 7 Z" fill="#0e8a10" stroke="#1d1d1d" stroke-width="1"/><rect x="2.5" y="1.6" width="7" height="1.8" fill="#cfd0a8"/></svg><div style="position:absolute;left:862.5500000000001px;top:798.84px;font-size:12px;line-height:12px;height:12px;color:#111;font-weight:normal;white-space:nowrap;">14</div><svg style="position:absolute;left:863.1500000000001px;top:812.4px;overflow:visible;" width="12" height="11" viewBox="0 0 12 11"><path d="M0.5 1.5 Q0.5 0.5 1.5 0.5 H10.5 Q11.5 0.5 11.5 1.5 V7 L8.5 9.5 V10.5 H3.5 V9.5 L0.5 7 Z" fill="#1f4c9e" stroke="#1d1d1d" stroke-width="1"/><rect x="2.5" y="1.6" width="7" height="1.8" fill="#cfd0a8"/></svg><div style="position:absolute;left:891.1px;top:798.84px;font-size:12px;line-height:12px;height:12px;color:#111;font-weight:normal;white-space:nowrap;">15</div><svg style="position:absolute;left:891.7px;top:812.4px;overflow:visible;" width="12" height="11" viewBox="0 0 12 11"><path d="M0.5 1.5 Q0.5 0.5 1.5 0.5 H10.5 Q11.5 0.5 11.5 1.5 V7 L8.5 9.5 V10.5 H3.5 V9.5 L0.5 7 Z" fill="#0e8a10" stroke="#1d1d1d" stroke-width="1"/><rect x="2.5" y="1.6" width="7" height="1.8" fill="#cfd0a8"/></svg><div style="position:absolute;left:919.65px;top:798.84px;font-size:12px;line-height:12px;height:12px;color:#111;font-weight:normal;white-space:nowrap;">16</div><svg style="position:absolute;left:920.25px;top:812.4px;overflow:visible;" width="12" height="11" viewBox="0 0 12 11"><path d="M0.5 1.5 Q0.5 0.5 1.5 0.5 H10.5 Q11.5 0.5 11.5 1.5 V7 L8.5 9.5 V10.5 H3.5 V9.5 L0.5 7 Z" fill="#1f4c9e" stroke="#1d1d1d" stroke-width="1"/><rect x="2.5" y="1.6" width="7" height="1.8" fill="#cfd0a8"/></svg><div style="position:absolute;left:948.1999999999999px;top:798.84px;font-size:12px;line-height:12px;height:12px;color:#111;font-weight:normal;white-space:nowrap;">17</div><svg style="position:absolute;left:948.8px;top:812.4px;overflow:visible;" width="12" height="11" viewBox="0 0 12 11"><path d="M0.5 1.5 Q0.5 0.5 1.5 0.5 H10.5 Q11.5 0.5 11.5 1.5 V7 L8.5 9.5 V10.5 H3.5 V9.5 L0.5 7 Z" fill="#0e8a10" stroke="#1d1d1d" stroke-width="1"/><rect x="2.5" y="1.6" width="7" height="1.8" fill="#cfd0a8"/></svg><div style="position:absolute;left:976.75px;top:798.84px;font-size:12px;line-height:12px;height:12px;color:#111;font-weight:normal;white-space:nowrap;">18</div><svg style="position:absolute;left:977.35px;top:812.4px;overflow:visible;" width="12" height="11" viewBox="0 0 12 11"><path d="M0.5 1.5 Q0.5 0.5 1.5 0.5 H10.5 Q11.5 0.5 11.5 1.5 V7 L8.5 9.5 V10.5 H3.5 V9.5 L0.5 7 Z" fill="#1f4c9e" stroke="#1d1d1d" stroke-width="1"/><rect x="2.5" y="1.6" width="7" height="1.8" fill="#cfd0a8"/></svg><div style="position:absolute;left:1005.3px;top:798.84px;font-size:12px;line-height:12px;height:12px;color:#111;font-weight:normal;white-space:nowrap;">19</div><svg style="position:absolute;left:1005.9px;top:812.4px;overflow:visible;" width="12" height="11" viewBox="0 0 12 11"><path d="M0.5 1.5 Q0.5 0.5 1.5 0.5 H10.5 Q11.5 0.5 11.5 1.5 V7 L8.5 9.5 V10.5 H3.5 V9.5 L0.5 7 Z" fill="#0e8a10" stroke="#1d1d1d" stroke-width="1"/><rect x="2.5" y="1.6" width="7" height="1.8" fill="#cfd0a8"/></svg><div style="position:absolute;left:1033.8500000000001px;top:798.84px;font-size:12px;line-height:12px;height:12px;color:#111;font-weight:normal;white-space:nowrap;">20</div><svg style="position:absolute;left:1034.45px;top:812.4px;overflow:visible;" width="12" height="11" viewBox="0 0 12 11"><path d="M0.5 1.5 Q0.5 0.5 1.5 0.5 H10.5 Q11.5 0.5 11.5 1.5 V7 L8.5 9.5 V10.5 H3.5 V9.5 L0.5 7 Z" fill="#1f4c9e" stroke="#1d1d1d" stroke-width="1"/><rect x="2.5" y="1.6" width="7" height="1.8" fill="#cfd0a8"/></svg><div style="position:absolute;left:1062.4px;top:798.84px;font-size:12px;line-height:12px;height:12px;color:#111;font-weight:normal;white-space:nowrap;">21</div><svg style="position:absolute;left:1063.0px;top:812.4px;overflow:visible;" width="12" height="11" viewBox="0 0 12 11"><path d="M0.5 1.5 Q0.5 0.5 1.5 0.5 H10.5 Q11.5 0.5 11.5 1.5 V7 L8.5 9.5 V10.5 H3.5 V9.5 L0.5 7 Z" fill="#0e8a10" stroke="#1d1d1d" stroke-width="1"/><rect x="2.5" y="1.6" width="7" height="1.8" fill="#cfd0a8"/></svg><div style="position:absolute;left:1090.9500000000003px;top:798.84px;font-size:12px;line-height:12px;height:12px;color:#111;font-weight:normal;white-space:nowrap;">22</div><svg style="position:absolute;left:1091.5500000000002px;top:812.4px;overflow:visible;" width="12" height="11" viewBox="0 0 12 11"><path d="M0.5 1.5 Q0.5 0.5 1.5 0.5 H10.5 Q11.5 0.5 11.5 1.5 V7 L8.5 9.5 V10.5 H3.5 V9.5 L0.5 7 Z" fill="#1f4c9e" stroke="#1d1d1d" stroke-width="1"/><rect x="2.5" y="1.6" width="7" height="1.8" fill="#cfd0a8"/></svg><div style="position:absolute;left:1119.5px;top:798.84px;font-size:12px;line-height:12px;height:12px;color:#111;font-weight:normal;white-space:nowrap;">23</div><svg style="position:absolute;left:1120.1px;top:812.4px;overflow:visible;" width="12" height="11" viewBox="0 0 12 11"><path d="M0.5 1.5 Q0.5 0.5 1.5 0.5 H10.5 Q11.5 0.5 11.5 1.5 V7 L8.5 9.5 V10.5 H3.5 V9.5 L0.5 7 Z" fill="#0e8a10" stroke="#1d1d1d" stroke-width="1"/><rect x="2.5" y="1.6" width="7" height="1.8" fill="#cfd0a8"/></svg><div style="position:absolute;left:1148.0500000000002px;top:798.84px;font-size:12px;line-height:12px;height:12px;color:#111;font-weight:normal;white-space:nowrap;">24</div><svg style="position:absolute;left:1148.65px;top:812.4px;overflow:visible;" width="12" height="11" viewBox="0 0 12 11"><path d="M0.5 1.5 Q0.5 0.5 1.5 0.5 H10.5 Q11.5 0.5 11.5 1.5 V7 L8.5 9.5 V10.5 H3.5 V9.5 L0.5 7 Z" fill="#1f4c9e" stroke="#1d1d1d" stroke-width="1"/><rect x="2.5" y="1.6" width="7" height="1.8" fill="#cfd0a8"/></svg><div style="position:absolute;left:472px;top:842px;width:721px;height:68px;background:#fff;"></div><div style="position:absolute;left:465px;top:843px;width:7px;height:67.5px;background:#b3b3b9;"></div><div style="position:absolute;left:1193px;top:843px;width:7px;height:67.5px;background:#b3b3b9;"></div><div style="position:absolute;left:473px;top:843px;width:719px;height:12px;background:linear-gradient(#90b7e4 0%,#88acd8 55%,#7f9cc0 88%,#7e8898 100%);"></div><div style="position:absolute;left:475.5px;top:843.83px;font-size:10.6px;line-height:10.6px;height:10.6px;color:#fff;font-weight:normal;white-space:nowrap;letter-spacing:0.1px;">PP-BIO-32</div><div style="position:absolute;left:1172.2px;top:844.58px;font-size:9px;line-height:9px;height:9px;color:#eef2f8;font-weight:normal;white-space:nowrap;">F</div><div style="position:absolute;left:1181.8px;top:844.58px;font-size:9px;line-height:9px;height:9px;color:#eef2f8;font-weight:normal;white-space:nowrap;">R</div><div style="position:absolute;left:473px;top:856px;width:719px;height:51px;background:linear-gradient(170deg,#f1f3f6,#e9edf2);"></div><div style="position:absolute;left:472px;top:908px;width:721px;height:1.6px;background:#b6b9c0;"></div><div style="position:absolute;left:494.7px;top:866.24px;font-size:12px;line-height:12px;height:12px;color:#111;font-weight:normal;white-space:nowrap;">1</div><svg style="position:absolute;left:492.0px;top:879.8px;overflow:visible;" width="12" height="11" viewBox="0 0 12 11"><path d="M0.5 1.5 Q0.5 0.5 1.5 0.5 H10.5 Q11.5 0.5 11.5 1.5 V7 L8.5 9.5 V10.5 H3.5 V9.5 L0.5 7 Z" fill="#0e8a10" stroke="#1d1d1d" stroke-width="1"/><rect x="2.5" y="1.6" width="7" height="1.8" fill="#cfd0a8"/></svg><div style="position:absolute;left:523.25px;top:866.24px;font-size:12px;line-height:12px;height:12px;color:#111;font-weight:normal;white-space:nowrap;">2</div><svg style="position:absolute;left:520.55px;top:879.8px;overflow:visible;" width="12" height="11" viewBox="0 0 12 11"><path d="M0.5 1.5 Q0.5 0.5 1.5 0.5 H10.5 Q11.5 0.5 11.5 1.5 V7 L8.5 9.5 V10.5 H3.5 V9.5 L0.5 7 Z" fill="#1f4c9e" stroke="#1d1d1d" stroke-width="1"/><rect x="2.5" y="1.6" width="7" height="1.8" fill="#cfd0a8"/></svg><div style="position:absolute;left:551.8000000000001px;top:866.24px;font-size:12px;line-height:12px;height:12px;color:#111;font-weight:normal;white-space:nowrap;">3</div><svg style="position:absolute;left:549.1px;top:879.8px;overflow:visible;" width="12" height="11" viewBox="0 0 12 11"><path d="M0.5 1.5 Q0.5 0.5 1.5 0.5 H10.5 Q11.5 0.5 11.5 1.5 V7 L8.5 9.5 V10.5 H3.5 V9.5 L0.5 7 Z" fill="#0e8a10" stroke="#1d1d1d" stroke-width="1"/><rect x="2.5" y="1.6" width="7" height="1.8" fill="#cfd0a8"/></svg><div style="position:absolute;left:580.35px;top:866.24px;font-size:12px;line-height:12px;height:12px;color:#111;font-weight:normal;white-space:nowrap;">4</div><svg style="position:absolute;left:577.65px;top:879.8px;overflow:visible;" width="12" height="11" viewBox="0 0 12 11"><path d="M0.5 1.5 Q0.5 0.5 1.5 0.5 H10.5 Q11.5 0.5 11.5 1.5 V7 L8.5 9.5 V10.5 H3.5 V9.5 L0.5 7 Z" fill="#1f4c9e" stroke="#1d1d1d" stroke-width="1"/><rect x="2.5" y="1.6" width="7" height="1.8" fill="#cfd0a8"/></svg><div style="position:absolute;left:608.9000000000001px;top:866.24px;font-size:12px;line-height:12px;height:12px;color:#111;font-weight:normal;white-space:nowrap;">5</div><svg style="position:absolute;left:606.2px;top:879.8px;overflow:visible;" width="12" height="11" viewBox="0 0 12 11"><path d="M0.5 1.5 Q0.5 0.5 1.5 0.5 H10.5 Q11.5 0.5 11.5 1.5 V7 L8.5 9.5 V10.5 H3.5 V9.5 L0.5 7 Z" fill="#0e8a10" stroke="#1d1d1d" stroke-width="1"/><rect x="2.5" y="1.6" width="7" height="1.8" fill="#cfd0a8"/></svg><div style="position:absolute;left:637.45px;top:866.24px;font-size:12px;line-height:12px;height:12px;color:#111;font-weight:normal;white-space:nowrap;">6</div><svg style="position:absolute;left:634.75px;top:879.8px;overflow:visible;" width="12" height="11" viewBox="0 0 12 11"><path d="M0.5 1.5 Q0.5 0.5 1.5 0.5 H10.5 Q11.5 0.5 11.5 1.5 V7 L8.5 9.5 V10.5 H3.5 V9.5 L0.5 7 Z" fill="#1f4c9e" stroke="#1d1d1d" stroke-width="1"/><rect x="2.5" y="1.6" width="7" height="1.8" fill="#cfd0a8"/></svg><div style="position:absolute;left:666.0px;top:866.24px;font-size:12px;line-height:12px;height:12px;color:#111;font-weight:normal;white-space:nowrap;">7</div><svg style="position:absolute;left:663.3px;top:879.8px;overflow:visible;" width="12" height="11" viewBox="0 0 12 11"><path d="M0.5 1.5 Q0.5 0.5 1.5 0.5 H10.5 Q11.5 0.5 11.5 1.5 V7 L8.5 9.5 V10.5 H3.5 V9.5 L0.5 7 Z" fill="#0e8a10" stroke="#1d1d1d" stroke-width="1"/><rect x="2.5" y="1.6" width="7" height="1.8" fill="#cfd0a8"/></svg><div style="position:absolute;left:694.5500000000001px;top:866.24px;font-size:12px;line-height:12px;height:12px;color:#111;font-weight:normal;white-space:nowrap;">8</div><svg style="position:absolute;left:691.85px;top:879.8px;overflow:visible;" width="12" height="11" viewBox="0 0 12 11"><path d="M0.5 1.5 Q0.5 0.5 1.5 0.5 H10.5 Q11.5 0.5 11.5 1.5 V7 L8.5 9.5 V10.5 H3.5 V9.5 L0.5 7 Z" fill="#0e8a10" stroke="#1d1d1d" stroke-width="1"/><rect x="2.5" y="1.6" width="7" height="1.8" fill="#cfd0a8"/></svg><div style="position:absolute;left:723.1px;top:866.24px;font-size:12px;line-height:12px;height:12px;color:#111;font-weight:normal;white-space:nowrap;">9</div><svg style="position:absolute;left:720.4px;top:879.8px;overflow:visible;" width="12" height="11" viewBox="0 0 12 11"><path d="M0.5 1.5 Q0.5 0.5 1.5 0.5 H10.5 Q11.5 0.5 11.5 1.5 V7 L8.5 9.5 V10.5 H3.5 V9.5 L0.5 7 Z" fill="#0e8a10" stroke="#1d1d1d" stroke-width="1"/><rect x="2.5" y="1.6" width="7" height="1.8" fill="#cfd0a8"/></svg><div style="position:absolute;left:748.35px;top:866.24px;font-size:12px;line-height:12px;height:12px;color:#111;font-weight:normal;white-space:nowrap;">10</div><svg style="position:absolute;left:748.95px;top:879.8px;overflow:visible;" width="12" height="11" viewBox="0 0 12 11"><path d="M0.5 1.5 Q0.5 0.5 1.5 0.5 H10.5 Q11.5 0.5 11.5 1.5 V7 L8.5 9.5 V10.5 H3.5 V9.5 L0.5 7 Z" fill="#0e8a10" stroke="#1d1d1d" stroke-width="1"/><rect x="2.5" y="1.6" width="7" height="1.8" fill="#cfd0a8"/></svg><div style="position:absolute;left:776.9px;top:866.24px;font-size:12px;line-height:12px;height:12px;color:#111;font-weight:normal;white-space:nowrap;">11</div><svg style="position:absolute;left:777.5px;top:879.8px;overflow:visible;" width="12" height="11" viewBox="0 0 12 11"><path d="M0.5 1.5 Q0.5 0.5 1.5 0.5 H10.5 Q11.5 0.5 11.5 1.5 V7 L8.5 9.5 V10.5 H3.5 V9.5 L0.5 7 Z" fill="#505050" stroke="#1d1d1d" stroke-width="1"/><rect x="2.5" y="1.6" width="7" height="1.8" fill="#cfd0a8"/></svg><div style="position:absolute;left:805.4499999999999px;top:866.24px;font-size:12px;line-height:12px;height:12px;color:#111;font-weight:normal;white-space:nowrap;">12</div><svg style="position:absolute;left:806.05px;top:879.8px;overflow:visible;" width="12" height="11" viewBox="0 0 12 11"><path d="M0.5 1.5 Q0.5 0.5 1.5 0.5 H10.5 Q11.5 0.5 11.5 1.5 V7 L8.5 9.5 V10.5 H3.5 V9.5 L0.5 7 Z" fill="#505050" stroke="#1d1d1d" stroke-width="1"/><rect x="2.5" y="1.6" width="7" height="1.8" fill="#cfd0a8"/></svg><div style="position:absolute;left:834.0px;top:866.24px;font-size:12px;line-height:12px;height:12px;color:#111;font-weight:normal;white-space:nowrap;">13</div><svg style="position:absolute;left:834.6px;top:879.8px;overflow:visible;" width="12" height="11" viewBox="0 0 12 11"><path d="M0.5 1.5 Q0.5 0.5 1.5 0.5 H10.5 Q11.5 0.5 11.5 1.5 V7 L8.5 9.5 V10.5 H3.5 V9.5 L0.5 7 Z" fill="#505050" stroke="#1d1d1d" stroke-width="1"/><rect x="2.5" y="1.6" width="7" height="1.8" fill="#cfd0a8"/></svg><div style="position:absolute;left:862.5500000000001px;top:866.24px;font-size:12px;line-height:12px;height:12px;color:#111;font-weight:normal;white-space:nowrap;">14</div><svg style="position:absolute;left:863.1500000000001px;top:879.8px;overflow:visible;" width="12" height="11" viewBox="0 0 12 11"><path d="M0.5 1.5 Q0.5 0.5 1.5 0.5 H10.5 Q11.5 0.5 11.5 1.5 V7 L8.5 9.5 V10.5 H3.5 V9.5 L0.5 7 Z" fill="#505050" stroke="#1d1d1d" stroke-width="1"/><rect x="2.5" y="1.6" width="7" height="1.8" fill="#cfd0a8"/></svg><div style="position:absolute;left:891.1px;top:866.24px;font-size:12px;line-height:12px;height:12px;color:#111;font-weight:normal;white-space:nowrap;">15</div><svg style="position:absolute;left:891.7px;top:879.8px;overflow:visible;" width="12" height="11" viewBox="0 0 12 11"><path d="M0.5 1.5 Q0.5 0.5 1.5 0.5 H10.5 Q11.5 0.5 11.5 1.5 V7 L8.5 9.5 V10.5 H3.5 V9.5 L0.5 7 Z" fill="#505050" stroke="#1d1d1d" stroke-width="1"/><rect x="2.5" y="1.6" width="7" height="1.8" fill="#cfd0a8"/></svg><div style="position:absolute;left:919.65px;top:866.24px;font-size:12px;line-height:12px;height:12px;color:#111;font-weight:normal;white-space:nowrap;">16</div><svg style="position:absolute;left:920.25px;top:879.8px;overflow:visible;" width="12" height="11" viewBox="0 0 12 11"><path d="M0.5 1.5 Q0.5 0.5 1.5 0.5 H10.5 Q11.5 0.5 11.5 1.5 V7 L8.5 9.5 V10.5 H3.5 V9.5 L0.5 7 Z" fill="#505050" stroke="#1d1d1d" stroke-width="1"/><rect x="2.5" y="1.6" width="7" height="1.8" fill="#cfd0a8"/></svg><div style="position:absolute;left:948.1999999999999px;top:866.24px;font-size:12px;line-height:12px;height:12px;color:#111;font-weight:normal;white-space:nowrap;">17</div><svg style="position:absolute;left:948.8px;top:879.8px;overflow:visible;" width="12" height="11" viewBox="0 0 12 11"><path d="M0.5 1.5 Q0.5 0.5 1.5 0.5 H10.5 Q11.5 0.5 11.5 1.5 V7 L8.5 9.5 V10.5 H3.5 V9.5 L0.5 7 Z" fill="#505050" stroke="#1d1d1d" stroke-width="1"/><rect x="2.5" y="1.6" width="7" height="1.8" fill="#cfd0a8"/></svg><div style="position:absolute;left:976.75px;top:866.24px;font-size:12px;line-height:12px;height:12px;color:#111;font-weight:normal;white-space:nowrap;">18</div><svg style="position:absolute;left:977.35px;top:879.8px;overflow:visible;" width="12" height="11" viewBox="0 0 12 11"><path d="M0.5 1.5 Q0.5 0.5 1.5 0.5 H10.5 Q11.5 0.5 11.5 1.5 V7 L8.5 9.5 V10.5 H3.5 V9.5 L0.5 7 Z" fill="#505050" stroke="#1d1d1d" stroke-width="1"/><rect x="2.5" y="1.6" width="7" height="1.8" fill="#cfd0a8"/></svg><div style="position:absolute;left:1005.3px;top:866.24px;font-size:12px;line-height:12px;height:12px;color:#111;font-weight:normal;white-space:nowrap;">19</div><svg style="position:absolute;left:1005.9px;top:879.8px;overflow:visible;" width="12" height="11" viewBox="0 0 12 11"><path d="M0.5 1.5 Q0.5 0.5 1.5 0.5 H10.5 Q11.5 0.5 11.5 1.5 V7 L8.5 9.5 V10.5 H3.5 V9.5 L0.5 7 Z" fill="#505050" stroke="#1d1d1d" stroke-width="1"/><rect x="2.5" y="1.6" width="7" height="1.8" fill="#cfd0a8"/></svg><div style="position:absolute;left:1033.8500000000001px;top:866.24px;font-size:12px;line-height:12px;height:12px;color:#111;font-weight:normal;white-space:nowrap;">20</div><svg style="position:absolute;left:1034.45px;top:879.8px;overflow:visible;" width="12" height="11" viewBox="0 0 12 11"><path d="M0.5 1.5 Q0.5 0.5 1.5 0.5 H10.5 Q11.5 0.5 11.5 1.5 V7 L8.5 9.5 V10.5 H3.5 V9.5 L0.5 7 Z" fill="#505050" stroke="#1d1d1d" stroke-width="1"/><rect x="2.5" y="1.6" width="7" height="1.8" fill="#cfd0a8"/></svg><div style="position:absolute;left:1062.4px;top:866.24px;font-size:12px;line-height:12px;height:12px;color:#111;font-weight:normal;white-space:nowrap;">21</div><svg style="position:absolute;left:1063.0px;top:879.8px;overflow:visible;" width="12" height="11" viewBox="0 0 12 11"><path d="M0.5 1.5 Q0.5 0.5 1.5 0.5 H10.5 Q11.5 0.5 11.5 1.5 V7 L8.5 9.5 V10.5 H3.5 V9.5 L0.5 7 Z" fill="#505050" stroke="#1d1d1d" stroke-width="1"/><rect x="2.5" y="1.6" width="7" height="1.8" fill="#cfd0a8"/></svg><div style="position:absolute;left:1090.9500000000003px;top:866.24px;font-size:12px;line-height:12px;height:12px;color:#111;font-weight:normal;white-space:nowrap;">22</div><svg style="position:absolute;left:1091.5500000000002px;top:879.8px;overflow:visible;" width="12" height="11" viewBox="0 0 12 11"><path d="M0.5 1.5 Q0.5 0.5 1.5 0.5 H10.5 Q11.5 0.5 11.5 1.5 V7 L8.5 9.5 V10.5 H3.5 V9.5 L0.5 7 Z" fill="#505050" stroke="#1d1d1d" stroke-width="1"/><rect x="2.5" y="1.6" width="7" height="1.8" fill="#cfd0a8"/></svg><div style="position:absolute;left:1119.5px;top:866.24px;font-size:12px;line-height:12px;height:12px;color:#111;font-weight:normal;white-space:nowrap;">23</div><svg style="position:absolute;left:1120.1px;top:879.8px;overflow:visible;" width="12" height="11" viewBox="0 0 12 11"><path d="M0.5 1.5 Q0.5 0.5 1.5 0.5 H10.5 Q11.5 0.5 11.5 1.5 V7 L8.5 9.5 V10.5 H3.5 V9.5 L0.5 7 Z" fill="#505050" stroke="#1d1d1d" stroke-width="1"/><rect x="2.5" y="1.6" width="7" height="1.8" fill="#cfd0a8"/></svg><div style="position:absolute;left:1148.0500000000002px;top:866.24px;font-size:12px;line-height:12px;height:12px;color:#111;font-weight:normal;white-space:nowrap;">24</div><svg style="position:absolute;left:1148.65px;top:879.8px;overflow:visible;" width="12" height="11" viewBox="0 0 12 11"><path d="M0.5 1.5 Q0.5 0.5 1.5 0.5 H10.5 Q11.5 0.5 11.5 1.5 V7 L8.5 9.5 V10.5 H3.5 V9.5 L0.5 7 Z" fill="#505050" stroke="#1d1d1d" stroke-width="1"/><rect x="2.5" y="1.6" width="7" height="1.8" fill="#cfd0a8"/></svg><div style="position:absolute;left:472px;top:910px;width:721px;height:68px;background:#fff;"></div><div style="position:absolute;left:465px;top:911px;width:7px;height:67.5px;background:#b3b3b9;"></div><div style="position:absolute;left:1193px;top:911px;width:7px;height:67.5px;background:#b3b3b9;"></div><div style="position:absolute;left:473px;top:911px;width:719px;height:12px;background:linear-gradient(#90b7e4 0%,#88acd8 55%,#7f9cc0 88%,#7e8898 100%);"></div><div style="position:absolute;left:475.5px;top:911.83px;font-size:10.6px;line-height:10.6px;height:10.6px;color:#fff;font-weight:normal;white-space:nowrap;letter-spacing:0.32px;">Blind Panel</div><div style="position:absolute;left:1172.2px;top:912.58px;font-size:9px;line-height:9px;height:9px;color:#eef2f8;font-weight:normal;white-space:nowrap;">F</div><div style="position:absolute;left:1181.8px;top:912.58px;font-size:9px;line-height:9px;height:9px;color:#eef2f8;font-weight:normal;white-space:nowrap;">R</div><div style="position:absolute;left:473px;top:924px;width:719px;height:51px;background:linear-gradient(170deg,#f1f3f6,#e9edf2);"></div><div style="position:absolute;left:472px;top:976px;width:721px;height:1.6px;background:#b6b9c0;"></div><div style="position:absolute;left:232.20000000000005px;top:934.06px;width:1200px;text-align:center;font-size:39.5px;line-height:39.5px;height:39.5px;color:#bcbfc3;white-space:nowrap;transform:scaleX(0.99);transform-origin:50% 0;">Blind Panel</div></div><div style="position:absolute;left:392px;top:967px;width:511px;height:4px;background:#b2b2b2;"></div><div style="position:absolute;left:1362px;top:130px;width:4px;height:233px;background:#b2b2b2;"></div><div style="position:absolute;left:0;top:0;width:1424px;height:1064px;clip-path:inset(100px 68px 103px 1280px);"><div style="position:absolute;left:1290.5px;top:165.04px;font-size:12px;line-height:12px;height:12px;color:#111;font-weight:normal;white-space:nowrap;">Knürr CoolBlastT 6 Fan Unit 16</div><div style="position:absolute;left:1290.5px;top:188.04px;font-size:12px;line-height:12px;height:12px;color:#666;font-weight:normal;white-space:nowrap;">Cabinet climate</div><div style="position:absolute;left:1290.5px;top:233.04px;font-size:12px;line-height:12px;height:12px;color:#111;font-weight:normal;white-space:nowrap;">PP-BIO-41</div><div style="position:absolute;left:1290.5px;top:256.04px;font-size:12px;line-height:12px;height:12px;color:#666;font-weight:normal;white-space:nowrap;">Horizontal Patch</div><div style="position:absolute;left:1290.5px;top:369.04px;font-size:12px;line-height:12px;height:12px;color:#111;font-weight:normal;white-space:nowrap;">PP-BIO-39</div><div style="position:absolute;left:1290.5px;top:392.04px;font-size:12px;line-height:12px;height:12px;color:#666;font-weight:normal;white-space:nowrap;">Horizontal Patch</div><div style="position:absolute;left:1290.5px;top:573.04px;font-size:12px;line-height:12px;height:12px;color:#111;font-weight:normal;white-space:nowrap;">SWBIO01</div><div style="position:absolute;left:1290.5px;top:596.04px;font-size:12px;line-height:12px;height:12px;color:#666;font-weight:normal;white-space:nowrap;">Layer 2 Access Switch</div><div style="position:absolute;left:1290.5px;top:777.04px;font-size:12px;line-height:12px;height:12px;color:#111;font-weight:normal;white-space:nowrap;">PP-BIO-33</div><div style="position:absolute;left:1290.5px;top:800.04px;font-size:12px;line-height:12px;height:12px;color:#666;font-weight:normal;white-space:nowrap;">Data Outlet</div><div style="position:absolute;left:1290.5px;top:845.04px;font-size:12px;line-height:12px;height:12px;color:#111;font-weight:normal;white-space:nowrap;">PP-BIO-32</div><div style="position:absolute;left:1290.5px;top:868.04px;font-size:12px;line-height:12px;height:12px;color:#666;font-weight:normal;white-space:nowrap;">Data Outlet</div></div><svg style="position:absolute;left:1201.5px;top:570px;overflow:visible;" width="155" height="18" viewBox="0 0 155 18"><path d="M0 9 L7 0 H155 V18 H7 Z" fill="#0b870b"/></svg><div style="position:absolute;left:1201.5px;top:570px;width:154.5px;height:18px;overflow:hidden;"><div style="position:absolute;left:11.5px;top:3.82px;font-size:11.2px;line-height:11.2px;height:11.2px;color:#eef4e6;font-weight:normal;white-space:nowrap;letter-spacing:-0.2px;">WO-20221005-1 Set up printer</div></div><svg style="position:absolute;left:1201.5px;top:774px;overflow:visible;" width="155" height="18" viewBox="0 0 155 18"><path d="M0 9 L7 0 H155 V18 H7 Z" fill="#0b870b"/></svg><div style="position:absolute;left:1201.5px;top:774px;width:154.5px;height:18px;overflow:hidden;"><div style="position:absolute;left:11.5px;top:3.82px;font-size:11.2px;line-height:11.2px;height:11.2px;color:#eef4e6;font-weight:normal;white-space:nowrap;letter-spacing:-0.2px;">WO-20221005-1 Set up printer</div></div><svg style="position:absolute;left:1326px;top:846px;overflow:visible;" width="28" height="26" viewBox="0 0 28 26"><circle cx="11" cy="9.2" r="7.9" fill="none" stroke="#b5b5b5" stroke-width="2.4"/><path d="M17 15.5 L23 21.5" stroke="#b5b5b5" stroke-width="3.2"/><path d="M7.5 9.2 H14.5 M11 5.7 V12.7" stroke="#b5b5b5" stroke-width="1.5"/></svg><svg style="position:absolute;left:1326px;top:875px;overflow:visible;" width="28" height="26" viewBox="0 0 28 26"><circle cx="11" cy="9" r="7.9" fill="none" stroke="#b5b5b5" stroke-width="2.4"/><path d="M17 15.3 L23 21.3" stroke="#b5b5b5" stroke-width="3.2"/><path d="M7 9 H15" stroke="#b5b5b5" stroke-width="1.6"/></svg><svg style="position:absolute;left:1328px;top:904px;overflow:visible;" width="22" height="22" viewBox="0 0 22 22"><path d="M2 8.5 V2 H8.5 M13.5 2 H20 V8.5 M20 13.5 V20 H13.5 M8.5 20 H2 V13.5" fill="none" stroke="#b5b5b5" stroke-width="2"/></svg><svg style="position:absolute;left:1328px;top:933px;overflow:visible;" width="22" height="22" viewBox="0 0 22 22"><rect x="2.5" y="2.5" width="17" height="17" fill="none" stroke="#b5b5b5" stroke-width="1.2"/><rect x="0.5" y="0.5" width="4" height="4" fill="#fff" stroke="#b5b5b5"/><rect x="17.5" y="0.5" width="4" height="4" fill="#fff" stroke="#b5b5b5"/><rect x="0.5" y="17.5" width="4" height="4" fill="#fff" stroke="#b5b5b5"/><rect x="17.5" y="17.5" width="4" height="4" fill="#fff" stroke="#b5b5b5"/><text x="11" y="16.5" font-size="13" font-family="Liberation Sans" fill="#b5b5b5" text-anchor="middle">A</text></svg><svg style="position:absolute;left:790px;top:565px;overflow:visible;" width="30" height="30" viewBox="0 0 30 30"><path d="M16.3 6.6 L19.5 13.5 L28.1 18.4 L17.8 28.7 L6.9 27.7 L6.2 16 Z" fill="#0b870b"/></svg><svg style="position:absolute;left:580px;top:780px;overflow:visible;" width="30" height="30" viewBox="0 0 30 30"><path d="M13.8 4.3 L16 9 L25.8 16.3 L14.8 26.9 L4.3 25.8 L3.9 15.3 Z" fill="#0b870b"/></svg><div style="position:absolute;left:528.0px;top:584px;transform-origin:0 0;transform:rotate(-38deg);"><div style="position:absolute;left:-4px;top:-10px;height:16px;width:82px;background:rgba(244,172,176,0.38);border-radius:2px;"></div><div style="position:absolute;left:0;top:-8.465px;font-size:10px;line-height:10px;color:#1a1a1a;white-space:nowrap;">101 - VLAN BIO</div></div><div style="position:absolute;left:549.0px;top:584px;transform-origin:0 0;transform:rotate(-38deg);"><div style="position:absolute;left:-4px;top:-10px;height:16px;width:82px;background:rgba(244,172,176,0.38);border-radius:2px;"></div><div style="position:absolute;left:0;top:-8.465px;font-size:10px;line-height:10px;color:#1a1a1a;white-space:nowrap;">101 - VLAN BIO</div></div><div style="position:absolute;left:570.0px;top:584px;transform-origin:0 0;transform:rotate(-38deg);"><div style="position:absolute;left:-4px;top:-10px;height:16px;width:82px;background:rgba(244,172,176,0.38);border-radius:2px;"></div><div style="position:absolute;left:0;top:-8.465px;font-size:10px;line-height:10px;color:#1a1a1a;white-space:nowrap;">101 - VLAN BIO</div></div><div style="position:absolute;left:591.0px;top:584px;transform-origin:0 0;transform:rotate(-38deg);"><div style="position:absolute;left:-4px;top:-10px;height:16px;width:82px;background:rgba(244,172,176,0.38);border-radius:2px;"></div><div style="position:absolute;left:0;top:-8.465px;font-size:10px;line-height:10px;color:#1a1a1a;white-space:nowrap;">101 - VLAN BIO</div></div><div style="position:absolute;left:612.0px;top:584px;transform-origin:0 0;transform:rotate(-38deg);"><div style="position:absolute;left:-4px;top:-10px;height:16px;width:82px;background:rgba(244,172,176,0.38);border-radius:2px;"></div><div style="position:absolute;left:0;top:-8.465px;font-size:10px;line-height:10px;color:#1a1a1a;white-space:nowrap;">101 - VLAN BIO</div></div><div style="position:absolute;left:633.0px;top:584px;transform-origin:0 0;transform:rotate(-38deg);"><div style="position:absolute;left:-4px;top:-10px;height:16px;width:82px;background:rgba(244,172,176,0.38);border-radius:2px;"></div><div style="position:absolute;left:0;top:-8.465px;font-size:10px;line-height:10px;color:#1a1a1a;white-space:nowrap;">101 - VLAN BIO</div></div><div style="position:absolute;left:662.0px;top:584px;transform-origin:0 0;transform:rotate(-38deg);"><div style="position:absolute;left:-4px;top:-10px;height:16px;width:82px;background:rgba(244,172,176,0.38);border-radius:2px;"></div><div style="position:absolute;left:0;top:-8.465px;font-size:10px;line-height:10px;color:#1a1a1a;white-space:nowrap;">101 - VLAN BIO</div></div><div style="position:absolute;left:683.0px;top:584px;transform-origin:0 0;transform:rotate(-38deg);"><div style="position:absolute;left:-4px;top:-10px;height:16px;width:82px;background:rgba(244,172,176,0.38);border-radius:2px;"></div><div style="position:absolute;left:0;top:-8.465px;font-size:10px;line-height:10px;color:#1a1a1a;white-space:nowrap;">101 - VLAN BIO</div></div><div style="position:absolute;left:704.0px;top:584px;transform-origin:0 0;transform:rotate(-38deg);"><div style="position:absolute;left:-4px;top:-10px;height:16px;width:82px;background:rgba(244,172,176,0.38);border-radius:2px;"></div><div style="position:absolute;left:0;top:-8.465px;font-size:10px;line-height:10px;color:#1a1a1a;white-space:nowrap;">101 - VLAN BIO</div></div><div style="position:absolute;left:725.0px;top:584px;transform-origin:0 0;transform:rotate(-38deg);"><div style="position:absolute;left:-4px;top:-10px;height:16px;width:82px;background:rgba(244,172,176,0.38);border-radius:2px;"></div><div style="position:absolute;left:0;top:-8.465px;font-size:10px;line-height:10px;color:#1a1a1a;white-space:nowrap;">101 - VLAN BIO</div></div><div style="position:absolute;left:746.0px;top:584px;transform-origin:0 0;transform:rotate(-38deg);"><div style="position:absolute;left:-4px;top:-10px;height:16px;width:82px;background:rgba(244,172,176,0.38);border-radius:2px;"></div><div style="position:absolute;left:0;top:-8.465px;font-size:10px;line-height:10px;color:#1a1a1a;white-space:nowrap;">101 - VLAN BIO</div></div><div style="position:absolute;left:767.0px;top:584px;transform-origin:0 0;transform:rotate(-38deg);"><div style="position:absolute;left:-4px;top:-10px;height:16px;width:82px;background:rgba(244,172,176,0.38);border-radius:2px;"></div><div style="position:absolute;left:0;top:-8.465px;font-size:10px;line-height:10px;color:#1a1a1a;white-space:nowrap;">101 - VLAN BIO</div></div><div style="position:absolute;left:524.3px;top:647.7px;transform-origin:0 0;transform:rotate(38deg);"><div style="position:absolute;left:-4px;top:-10px;height:16px;width:82px;background:rgba(244,172,176,0.38);border-radius:2px;"></div><div style="position:absolute;left:0;top:-8.465px;font-size:10px;line-height:10px;color:#1a1a1a;white-space:nowrap;">101 - VLAN BIO</div></div><div style="position:absolute;left:545.3px;top:647.7px;transform-origin:0 0;transform:rotate(38deg);"><div style="position:absolute;left:-4px;top:-10px;height:16px;width:82px;background:rgba(244,172,176,0.38);border-radius:2px;"></div><div style="position:absolute;left:0;top:-8.465px;font-size:10px;line-height:10px;color:#1a1a1a;white-space:nowrap;">101 - VLAN BIO</div></div><div style="position:absolute;left:566.3px;top:647.7px;transform-origin:0 0;transform:rotate(38deg);"><div style="position:absolute;left:-4px;top:-10px;height:16px;width:82px;background:rgba(244,172,176,0.38);border-radius:2px;"></div><div style="position:absolute;left:0;top:-8.465px;font-size:10px;line-height:10px;color:#1a1a1a;white-space:nowrap;">101 - VLAN BIO</div></div><div style="position:absolute;left:587.3px;top:647.7px;transform-origin:0 0;transform:rotate(38deg);"><div style="position:absolute;left:-4px;top:-10px;height:16px;width:82px;background:rgba(244,172,176,0.38);border-radius:2px;"></div><div style="position:absolute;left:0;top:-8.465px;font-size:10px;line-height:10px;color:#1a1a1a;white-space:nowrap;">101 - VLAN BIO</div></div><div style="position:absolute;left:608.3px;top:647.7px;transform-origin:0 0;transform:rotate(38deg);"><div style="position:absolute;left:-4px;top:-10px;height:16px;width:82px;background:rgba(244,172,176,0.38);border-radius:2px;"></div><div style="position:absolute;left:0;top:-8.465px;font-size:10px;line-height:10px;color:#1a1a1a;white-space:nowrap;">101 - VLAN BIO</div></div><div style="position:absolute;left:629.3px;top:647.7px;transform-origin:0 0;transform:rotate(38deg);"><div style="position:absolute;left:-4px;top:-10px;height:16px;width:82px;background:rgba(244,172,176,0.38);border-radius:2px;"></div><div style="position:absolute;left:0;top:-8.465px;font-size:10px;line-height:10px;color:#1a1a1a;white-space:nowrap;">101 - VLAN BIO</div></div><div style="position:absolute;left:658.3px;top:647.7px;transform-origin:0 0;transform:rotate(38deg);"><div style="position:absolute;left:-4px;top:-10px;height:16px;width:82px;background:rgba(244,172,176,0.38);border-radius:2px;"></div><div style="position:absolute;left:0;top:-8.465px;font-size:10px;line-height:10px;color:#1a1a1a;white-space:nowrap;">101 - VLAN BIO</div></div>
</body></html>
